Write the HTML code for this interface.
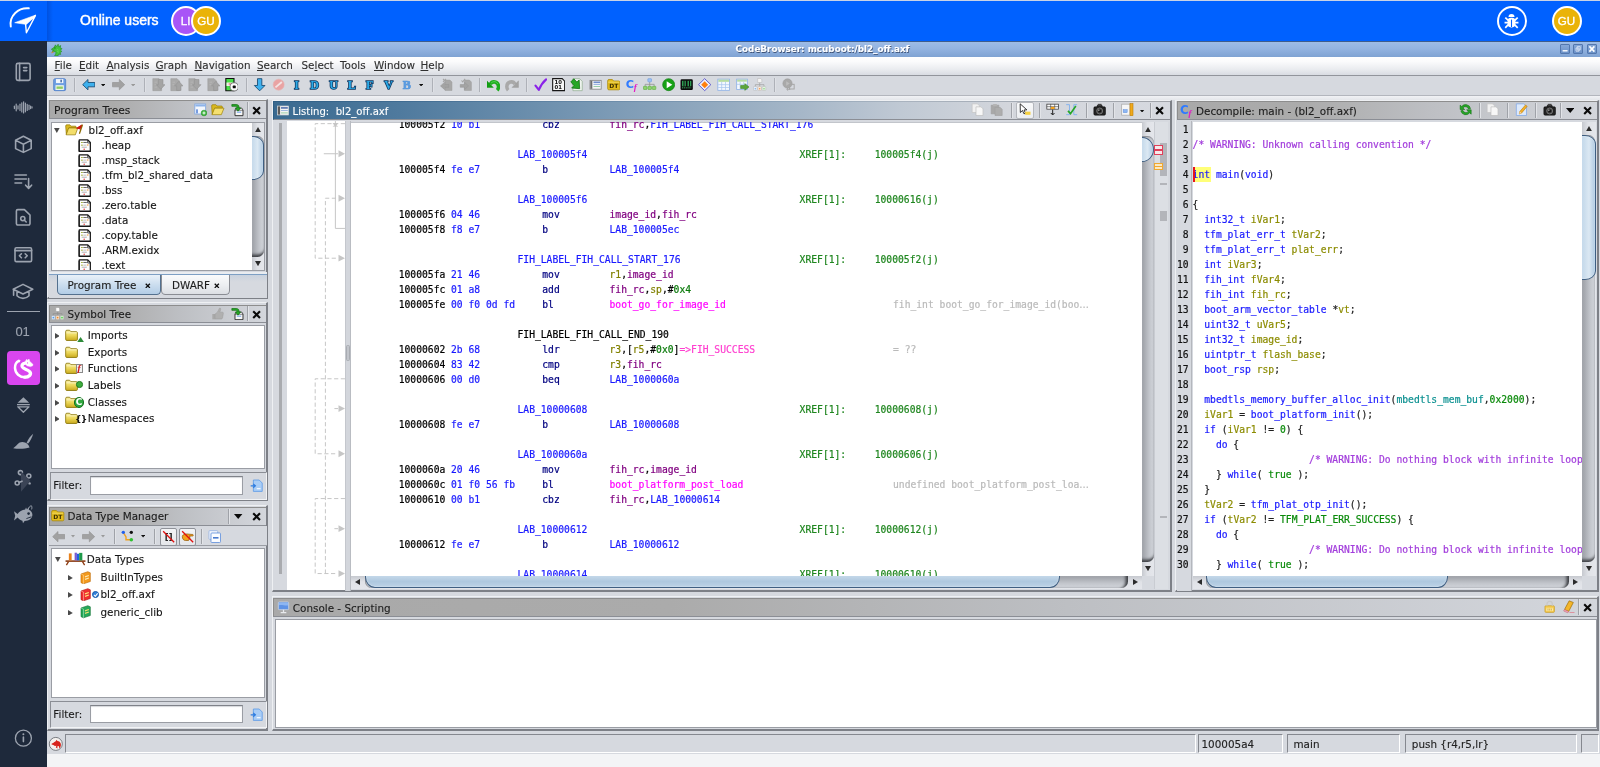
<!DOCTYPE html>
<html lang="en"><head><meta charset="utf-8"><title>CodeBrowser: mcuboot:/bl2_off.axf</title>
<style>
html,body{margin:0;padding:0}
body{width:1600px;height:767px;overflow:hidden;position:relative;background:#f3f4f6;font-family:"DejaVu Sans","Liberation Sans",sans-serif;font-size:10.4px;color:#161616}
div,svg,span.a{position:absolute;box-sizing:border-box}
.t{-webkit-text-stroke:.12px;white-space:pre;line-height:13px;height:13px}
.m{-webkit-text-stroke:.2px;font-family:"DejaVu Sans Mono","Liberation Mono",monospace;font-size:9.69px;white-space:pre;line-height:15px;height:15px}
.clip{overflow:hidden}
u{text-decoration-thickness:1px;text-underline-offset:1px}

</style></head>
<body>
<div id="root" style="left:0;top:0;width:1600px;height:767px;will-change:transform;background:#f3f4f6">

<!-- p_header -->
<div style="left:0px;top:0px;width:1600px;height:41px;background:#0061ff"></div><div style="left:0px;top:0px;width:1600px;height:1px;background:#c9d3e6"></div><div style="left:47px;top:1px;width:6px;height:40px;background:linear-gradient(to right,rgba(0,40,140,.28),rgba(0,40,140,0))"></div><svg style="left:0px;top:0px" width="47" height="41" viewBox="0 0 47 41"><path d="M28.800 8.300C18.500 7.400 9 15.500 10.800 26.600" fill="none" stroke="#fff" stroke-width="1.900" stroke-linecap="round"/><path d="M35.800 15L14.700 22.700 25.400 24.300z" fill="#fff" stroke="#fff" stroke-width=".6" stroke-linejoin="round"/><path d="M35.400 15.600L25.600 24.400 26.400 32.800z" fill="none" stroke="#fff" stroke-width="1.400" stroke-linejoin="round"/></svg><div class="t" style="left:80px;top:12.2px;font-family:'Liberation Sans',sans-serif;font-size:14px;line-height:17px;height:17px;color:#fff;-webkit-text-stroke:0.45px #fff">Online users</div><div style="left:170.6px;top:5.5px;width:30px;height:30px;border-radius:50%;border:2px solid #fff;color:#fff;font-family:'Liberation Sans',sans-serif;font-size:11.600px;line-height:26.400px;text-align:center;-webkit-text-stroke:.3px #fff;background:#a855f7">LI</div><div style="left:191px;top:5.5px;width:30px;height:30px;border-radius:50%;border:2px solid #fff;color:#fff;font-family:'Liberation Sans',sans-serif;font-size:11.600px;line-height:26.400px;text-align:center;-webkit-text-stroke:.3px #fff;background:#eab308">GU</div><div style="left:1496.5px;top:5.5px;width:30px;height:30px;border-radius:50%;border:2px solid #fff"></div><svg style="left:1500px;top:10px" width="24" height="22" viewBox="1500 10 24 22"><path d="M1508.500 16.900a3 3 0 0 1 6 0z" fill="#fff"/><rect x="1507.700" y="17.700" width="7.600" height="9.700" rx="3.300" fill="#fff"/><path d="M1511.500 19.600v7.400" stroke="#0061ff" stroke-width="1.100"/><path d="M1508 20.200l-2.100-2M1507.800 22.700h-2.400M1508 25l-2.100 2.200M1515 20.200l2.100-2M1515.200 22.700h2.400M1515 25l2.100 2.200" stroke="#fff" stroke-width="1.700" stroke-linecap="square"/></svg><div style="left:1551.5px;top:5.5px;width:30px;height:30px;border-radius:50%;border:2px solid #fff;color:#fff;font-family:'Liberation Sans',sans-serif;font-size:11.600px;line-height:26.400px;text-align:center;-webkit-text-stroke:.3px #fff;background:#eab308">GU</div>
<!-- p_sidebar -->
<div style="left:0px;top:41px;width:47px;height:726px;background:#1e293b"></div><svg style="left:13px;top:60.6px" width="21" height="22" viewBox="0 0 21 22" ><rect x="3.3" y="2.4" width="13.8" height="17" rx="1.6" fill="none" stroke="#9ca3af" stroke-width="1.6" stroke-linecap="round" stroke-linejoin="round"/><path d="M6.6 2.4V19.4M10.6 6.6h3.2M10.6 9.6h3.2" fill="none" stroke="#9ca3af" stroke-width="1.6" stroke-linecap="round" stroke-linejoin="round"/></svg><svg style="left:0px;top:95px" width="47" height="25" viewBox="0 95 47 25" ><path d="M14.4 106.2V108.6" stroke="#9ca3af" stroke-width="1.2" stroke-linecap="round"/><path d="M16.2 104V110.8" stroke="#9ca3af" stroke-width="1.2" stroke-linecap="round"/><path d="M18 105.8V109" stroke="#9ca3af" stroke-width="1.2" stroke-linecap="round"/><path d="M20 104.2V110.6" stroke="#9ca3af" stroke-width="1.2" stroke-linecap="round"/><path d="M21.8 102.8V112" stroke="#9ca3af" stroke-width="1.2" stroke-linecap="round"/><path d="M23.6 101.8V113" stroke="#9ca3af" stroke-width="1.2" stroke-linecap="round"/><path d="M25.4 103V111.8" stroke="#9ca3af" stroke-width="1.2" stroke-linecap="round"/><path d="M27.2 104.4V110.4" stroke="#9ca3af" stroke-width="1.2" stroke-linecap="round"/><path d="M29 105.2V109.6" stroke="#9ca3af" stroke-width="1.2" stroke-linecap="round"/><path d="M30.6 106.2V108.6" stroke="#9ca3af" stroke-width="1.2" stroke-linecap="round"/><path d="M32 106.8V108" stroke="#9ca3af" stroke-width="1.2" stroke-linecap="round"/></svg><svg style="left:12px;top:133px" width="23" height="22" viewBox="12 133 23 22" ><path d="M23.4 136.2 L31.2 140.2 V148.6 L23.4 152.4 L15.6 148.6 V140.2 Z M15.8 140.4 L23.4 144.3 L31 140.4 M23.4 144.3 V152.2" fill="none" stroke="#9ca3af" stroke-width="1.6" stroke-linecap="round" stroke-linejoin="round"/></svg><svg style="left:12px;top:171px" width="23" height="21" viewBox="12 171 23 21" ><path d="M15 175h11.4M15 179h11.4M15 183h6.6M28.6 178.6v9.6M25.6 185.2l3 3.2 3-3.2" fill="none" stroke="#9ca3af" stroke-width="1.6" stroke-linecap="round" stroke-linejoin="round" stroke-width="1.5"/></svg><svg style="left:13px;top:207px" width="21" height="21" viewBox="13 207 21 21" ><path d="M17.8 209.6h6.6l5.6 5.4v8.6a1.4 1.4 0 0 1-1.4 1.4h-10.8a1.4 1.4 0 0 1-1.4-1.4v-12.6a1.4 1.4 0 0 1 1.4-1.4z" fill="none" stroke="#9ca3af" stroke-width="1.6" stroke-linecap="round" stroke-linejoin="round"/><circle cx="22.8" cy="218.6" r="2.1" fill="none" stroke="#9ca3af" stroke-width="1.6" stroke-linecap="round" stroke-linejoin="round" stroke-width="1.3"/><path d="M24.4 220.2l1.8 1.8" fill="none" stroke="#9ca3af" stroke-width="1.6" stroke-linecap="round" stroke-linejoin="round" stroke-width="1.3"/></svg><svg style="left:12px;top:245px" width="23" height="20" viewBox="12 245 23 20" ><rect x="15" y="247.8" width="16.6" height="13.8" rx="1.4" fill="none" stroke="#9ca3af" stroke-width="1.6" stroke-linecap="round" stroke-linejoin="round"/><path d="M15 250.6h16.6" fill="none" stroke="#9ca3af" stroke-width="1.6" stroke-linecap="round" stroke-linejoin="round" stroke-width="2"/><path d="M21.4 253.8l-2 2 2 2M25.2 253.8l2 2-2 2" fill="none" stroke="#9ca3af" stroke-width="1.6" stroke-linecap="round" stroke-linejoin="round" stroke-width="1.4"/></svg><svg style="left:11px;top:281px" width="25" height="21" viewBox="11 281 25 21" ><path d="M23 284.4l9.8 4.8-9.8 4.8-9.8-4.8z M17 291.2v4.6c1.6 1.8 3.6 2.6 6 2.6s4.4-.8 6-2.6v-4.6 M13.6 289.6v5.6" fill="none" stroke="#9ca3af" stroke-width="1.6" stroke-linecap="round" stroke-linejoin="round"/></svg><div style="left:7px;top:311px;width:33px;height:1.2px;background:#9ca3af"></div><div class="t" style="left:15.4px;top:324px;font-family:'Liberation Sans',sans-serif;font-size:13px;line-height:16px;height:16px;color:#9ca3af">01</div><div style="left:6.7px;top:351px;width:33.3px;height:34px;background:#d946ef;border-radius:3.800px"></div><svg style="left:6px;top:350px" width="36" height="36" viewBox="6 350 36 36" ><path d="M28.600 363.600C24.200 362 21.400 364.200 22.200 366.800C23 369.200 27.400 369 29.800 371.800C31.800 374.400 29 377.200 24.600 377.200" fill="none" stroke="#fff" stroke-width="3.300" stroke-linecap="round"/><path d="M25.600 377.300C19.500 377.600 15.200 373.200 15 368C14.900 364.400 16.400 362 18.800 360.900" fill="none" stroke="#fff" stroke-width="2.500" stroke-linecap="round"/><path d="M17 361.200L20.800 360.200 19.400 362.600z" fill="#fff"/><path d="M25.200 361.400L26.800 359.200 27.600 360.600 29 359 29.600 361.200 33 364.400 32.600 365.800 30.400 366.600 26.800 365.800z" fill="#fff" stroke="#fff" stroke-width=".5" stroke-linejoin="round"/><circle cx="27.600" cy="362.900" r=".55" fill="#d946ef"/></svg><svg style="left:15px;top:395px" width="17" height="20" viewBox="15 395 17 20" ><path d="M23.4 397.2l5.8 5.6h-11.6z" fill="#9ca3af"/><path d="M17 404.600h12.800" stroke="#9ca3af" stroke-width="1.300"/><path d="M17.800 406.800h11.200l-5.600 5.400z" fill="none" stroke="#9ca3af" stroke-width="1.300" stroke-linejoin="round"/></svg><svg style="left:11px;top:432px" width="25" height="20" viewBox="11 432 25 20" ><path d="M13.200 448.200c2.200-1 3.600-3.800 6-5.400 2.600-1.600 5.800-1 8 1 1 .900 1.800 2.200 2.400 3.600-4.800 1.600-11 1.800-16.400.800z" fill="#9ca3af"/><path d="M26.600 443c1.600-3.800 3.600-6.800 6.600-9.200-1 3.400-2.600 6.800-5 9.800z" fill="#9ca3af"/></svg><svg style="left:12px;top:468px" width="23" height="24" viewBox="12 468 23 24" ><circle cx="20.400" cy="472.600" r="2" fill="none" stroke="#9ca3af" stroke-width="1.6" stroke-linecap="round" stroke-linejoin="round" stroke-width="1.300"/><circle cx="28.800" cy="476" r="2" fill="none" stroke="#9ca3af" stroke-width="1.6" stroke-linecap="round" stroke-linejoin="round" stroke-width="1.300"/><circle cx="17.200" cy="483" r="2" fill="none" stroke="#9ca3af" stroke-width="1.6" stroke-linecap="round" stroke-linejoin="round" stroke-width="1.300"/><circle cx="29.600" cy="483.400" r="1.200" fill="#9ca3af"/><path d="M21 471.200l9.400 9.600-9.400 11z" fill="#3b4456"/><path d="M19 482.400l3-1.200" fill="none" stroke="#9ca3af" stroke-width="1.6" stroke-linecap="round" stroke-linejoin="round" stroke-width="1.200"/></svg><svg style="left:12px;top:505px" width="23" height="22" viewBox="12 505 23 22" ><path d="M14 511.200l3.600 2.800c1.600-2.600 4.400-4.400 7.600-4.600l.8-1.800 1 1.800 1.400-2 .4 2.400c2.200.8 3.600 2.800 3.600 5 0 3.400-3.400 6.200-7.800 6.200l-1.600 2.200-.6-2.400c-2-.4-3.600-1.600-4.800-3.200l-3.600 3 1.200-4.800z" fill="#9ca3af"/><circle cx="28.600" cy="513.600" r="1.300" fill="#1e293b"/><path d="M28.200 509.600c.4-2.200 1.600-3.600 3.200-3.800.6 1 .6 2.200.2 3.600" fill="none" stroke="#9ca3af" stroke-width="1"/><path d="M26.400 518.600l5-1.800" stroke="#1e293b" stroke-width=".9"/></svg><svg style="left:13px;top:728px" width="21" height="21" viewBox="13 728 21 21" ><circle cx="23.400" cy="738.200" r="8" fill="none" stroke="#9ca3af" stroke-width="1.300"/><path d="M23.400 737v4.600" stroke="#9ca3af" stroke-width="1.600" stroke-linecap="round"/><circle cx="23.400" cy="734.200" r="1" fill="#9ca3af"/></svg>
<!-- p_chrome -->
<div style="left:47px;top:41px;width:1553px;height:712.5px;background:#d6d9df"></div><div style="left:47px;top:41px;width:1553px;height:1px;background:#3f5d8c"></div><div style="left:47px;top:41.6px;width:1553px;height:15px;background:linear-gradient(#9dbce6,#93b3e0 45%,#7fa3d3)"></div><svg style="left:49.600px;top:42.600px" width="13.600" height="13.600" viewBox="0 0 16 16"><path d="M1.600 7.400L5 5l1.400-2.800 1.200 2.200 2-3 .5 3 2.500-1.400-.6 3 2.100.5-1.600 2 1.500 1.500-2 1 .5 2.500-2-.5-1 2H5.400c1.500-2 2-3.500 1-5l-2.400.5-1.600-1 2.600-1z" fill="#43c43c" stroke="#218a1f" stroke-width=".7" stroke-linejoin="round"/><path d="M3.600 9.600L1 11.800l1.400.4 2.200-1.800z" fill="#d9822b"/><circle cx="5.800" cy="5.800" r=".7" fill="#0a5a0a"/><path d="M8 7.500l2 1M8.500 10l2 .8" stroke="#8fe08a" stroke-width=".6"/></svg><div class="t" style="left:735.6px;top:43.9px;font-weight:bold;font-size:8.800px;color:#fff;text-shadow:0.7px 0.8px 0.6px #3f5478;line-height:11px;height:11px">CodeBrowser: mcuboot:/bl2_off.axf</div><div style="left:1560.2px;top:44.3px;width:10px;height:9.5px;background:linear-gradient(#86a8d8,#6c92c8);border:1px solid #5377ad;border-radius:1px"></div><div style="left:1573.4px;top:44.3px;width:10px;height:9.5px;background:linear-gradient(#86a8d8,#6c92c8);border:1px solid #5377ad;border-radius:1px"></div><div style="left:1586.8px;top:44.3px;width:10px;height:9.5px;background:linear-gradient(#86a8d8,#6c92c8);border:1px solid #5377ad;border-radius:1px"></div><svg style="left:1560px;top:44px" width="38" height="10" viewBox="0 0 38 10"><path d="M2.600 6.800h5" stroke="#fff" stroke-width="1.400"/><path d="M17.200 2.600h3v3.400h-3z M16 4h3v3.200h-3z" fill="none" stroke="#dfe8f6" stroke-width=".8"/><path d="M29.400 2.400l5 5.200M34.400 2.400l-5 5.200" stroke="#fff" stroke-width="1.600"/></svg><div style="left:47px;top:56.6px;width:1553px;height:19px;background:linear-gradient(#ffffff 0%,#fbfbfc 25%,#e9ebef 70%,#d9dce2 100%);border-bottom:1px solid #92959c"></div><div class="t" style="left:54.6px;top:59.3px;color:#303030"><u>F</u>ile</div><div class="t" style="left:79px;top:59.3px;color:#303030"><u>E</u>dit</div><div class="t" style="left:106.5px;top:59.3px;color:#303030"><u>A</u>nalysis</div><div class="t" style="left:155.5px;top:59.3px;color:#303030"><u>G</u>raph</div><div class="t" style="left:194.5px;top:59.3px;color:#303030"><u>N</u>avigation</div><div class="t" style="left:257px;top:59.3px;color:#303030"><u>S</u>earch</div><div class="t" style="left:301.5px;top:59.3px;color:#303030">Se<u>l</u>ect</div><div class="t" style="left:340px;top:59.3px;color:#303030">Tools</div><div class="t" style="left:374px;top:59.3px;color:#303030"><u>W</u>indow</div><div class="t" style="left:420.5px;top:59.3px;color:#303030"><u>H</u>elp</div><div style="left:47px;top:95.2px;width:1553px;height:1px;background:#b3b6bd"></div><div style="left:47px;top:96.2px;width:1553px;height:3.8px;background:linear-gradient(#f1f2f5,#e4e6ea)"></div><div style="left:47px;top:731.6px;width:1553px;height:21.9px;background:#d6d9df"></div><div style="left:65.4px;top:734.3px;width:1130.6px;height:19.2px;border-top:1.5px solid #85888f;border-left:1.5px solid #85888f;border-bottom:1px solid #fff;border-right:1px solid #fff;background:#d6d9df"></div><div style="left:1198.2px;top:734.3px;width:85.3px;height:19.2px;border-top:1.5px solid #85888f;border-left:1.5px solid #85888f;border-bottom:1px solid #fff;border-right:1px solid #fff;background:#d6d9df"></div><div class="t" style="left:1201.5px;top:738.4px;color:#222">100005a4</div><div style="left:1287.2px;top:734.3px;width:113.3px;height:19.2px;border-top:1.5px solid #85888f;border-left:1.5px solid #85888f;border-bottom:1px solid #fff;border-right:1px solid #fff;background:#d6d9df"></div><div class="t" style="left:1293.5px;top:738.4px;color:#222">main</div><div style="left:1404.5px;top:734.3px;width:172.7px;height:19.2px;border-top:1.5px solid #85888f;border-left:1.5px solid #85888f;border-bottom:1px solid #fff;border-right:1px solid #fff;background:#d6d9df"></div><div class="t" style="left:1411.8px;top:738.4px;color:#222">push {r4,r5,lr}</div><div style="left:1581px;top:734.3px;width:17.6px;height:19.2px;border-top:1.5px solid #85888f;border-left:1.5px solid #85888f;border-bottom:1px solid #fff;border-right:1px solid #fff;background:#d6d9df"></div><svg style="left:48px;top:736px" width="16" height="16" viewBox="0 0 16 16"><circle cx="7.800" cy="7.900" r="6.500" fill="#f4f1ee" stroke="#6d6f76" stroke-width=".9"/><path d="M3.600 7.800c1.400-.600 2.400-1.800 3.800-2.400l1.400-1.600.6 1.200c1.800 0 3 1.200 3.400 2.800.4 1.800-.2 3.400-1.400 4.600l-.6-2.400-1.600.6.400 1.800-1.800-.8.600-1.800c-1.200.4-2.200 0-3-.8l-1.800-.4z" fill="#d8231c"/></svg>
<!-- p_toolbar -->
<svg style="left:53.3px;top:78.4px" width="13.333" height="13.333" viewBox="0 0 16 16"><rect x=".8" y=".8" width="14.400" height="14.400" rx="1.800" fill="#6e9fe3" stroke="#4a7bc8" stroke-width=".9"/><rect x="3.600" y="1.300" width="8.800" height="4.800" fill="#f2f6fc"/><rect x="8.800" y="2" width="2" height="3.200" fill="#5578ad"/><rect x="3" y="8.600" width="10" height="5.800" fill="#eef5e8"/><rect x="4.200" y="10.200" width="7.600" height="2.800" fill="#8fcb62"/></svg><svg style="left:81.5px;top:78.4px" width="13.333" height="13.333" viewBox="0 0 16 16"><path d="M.8 8 L7.200 1.800 V5.400 H15.400 V10.600 H7.200 V14.200 Z" fill="#3eb1ee" stroke="#14466e" stroke-width="1" stroke-linejoin="round"/></svg><svg style="left:111.5px;top:78.4px" width="13.333" height="13.333" viewBox="0 0 16 16"><path d="M15.200 8 L8.800 1.800 V5.400 H.6 V10.600 H8.800 V14.200 Z" fill="#a1a1a1" stroke="#949494" stroke-width=".8" stroke-linejoin="round"/></svg><svg style="left:151.5px;top:78.4px" width="13.333" height="13.333" viewBox="0 0 16 16"><path d="M1 .8h7.500l3 3V15.200H1z" fill="#a9a9a9" stroke="#9d9d9d" stroke-width=".7"/><path d="M7.800 1.800h5.400V8h2.400l-5.100 5.600L5.400 8h2.400z" fill="#a4a4a4" stroke="#929292" stroke-width=".7" stroke-linejoin="round"/><path d="M3 5h3M3 8h2M3 11h3" stroke="#b9b9b9" stroke-width=".8"/></svg><svg style="left:170px;top:78.4px" width="13.333" height="13.333" viewBox="0 0 16 16"><path d="M1 .8h7.500l3 3V15.200H1z" fill="#a9a9a9" stroke="#9d9d9d" stroke-width=".7"/><path d="M8 15V9.500H5.600L10.600 4l5 5.500h-2.400V15z" fill="#a4a4a4" stroke="#939393" stroke-width=".7"/><path d="M3 5h3M3 8h2" stroke="#bdbdbd" stroke-width=".8"/></svg><svg style="left:188.4px;top:78.4px" width="13.333" height="13.333" viewBox="0 0 16 16"><path d="M1 .8h7.500l3 3V15.200H1z" fill="#a9a9a9" stroke="#9d9d9d" stroke-width=".7"/><path d="M7.800 1.800h5.400V8h2.400l-5.100 5.600L5.400 8h2.400z" fill="#a4a4a4" stroke="#929292" stroke-width=".7" stroke-linejoin="round"/><path d="M3 5h3M3 8h2M3 11h3" stroke="#b9b9b9" stroke-width=".8"/></svg><svg style="left:206.8px;top:78.4px" width="13.333" height="13.333" viewBox="0 0 16 16"><path d="M1 .8h7.500l3 3V15.200H1z" fill="#a9a9a9" stroke="#9d9d9d" stroke-width=".7"/><path d="M8 15V9.500H5.600L10.600 4l5 5.500h-2.400V15z" fill="#a4a4a4" stroke="#939393" stroke-width=".7"/><path d="M3 5h3M3 8h2" stroke="#bdbdbd" stroke-width=".8"/></svg><svg style="left:224.8px;top:78.4px" width="13.333" height="13.333" viewBox="0 0 16 16"><path d="M1 .700h9.800V15.300H1z" fill="#46e046" stroke="#111" stroke-width="1.300"/><rect x="1.800" y="5.400" width="8.200" height="4.200" fill="#f3ecec"/><rect x="4.400" y="6.400" width="3.400" height="1.600" fill="#e47a7a"/><circle cx="11" cy="10.600" r="4.900" fill="#fbfbfb" stroke="#6a6a6a" stroke-width="1"/><rect x="9.300" y="9" width="3.600" height="3.400" rx=".8" fill="#0c0c0c"/></svg><svg style="left:253.4px;top:78.4px" width="13.333" height="13.333" viewBox="0 0 16 16"><path d="M8 15.400 L1.600 9 H5.400 V.8 H10.600 V9 H14.400 Z" fill="#3eb1ee" stroke="#14466e" stroke-width="1" stroke-linejoin="round"/></svg><svg style="left:271.8px;top:78.4px" width="13.333" height="13.333" viewBox="0 0 16 16"><circle cx="8" cy="8" r="6.600" fill="#e9a3a3" stroke="#e5b4b4" stroke-width=".8"/><path d="M4.200 11.200L11.800 4.800" stroke="#f3e3e3" stroke-width="2.200"/></svg><svg style="left:290px;top:78.4px" width="13.333" height="13.333" viewBox="0 0 16 16"><text x="8" y="13" text-anchor="middle" style="font-family:'Liberation Serif',serif;font-weight:bold;font-size:14.500px" fill="#2aa9e6" stroke="#0c3560" stroke-width="1.9" paint-order="stroke">I</text></svg><svg style="left:308.4px;top:78.4px" width="13.333" height="13.333" viewBox="0 0 16 16"><text x="8" y="13" text-anchor="middle" style="font-family:'Liberation Serif',serif;font-weight:bold;font-size:14.500px" fill="#2aa9e6" stroke="#0c3560" stroke-width="1.9" paint-order="stroke">D</text></svg><svg style="left:326.8px;top:78.4px" width="13.333" height="13.333" viewBox="0 0 16 16"><text x="8" y="13" text-anchor="middle" style="font-family:'Liberation Serif',serif;font-weight:bold;font-size:14.500px" fill="#2aa9e6" stroke="#0c3560" stroke-width="1.9" paint-order="stroke">U</text></svg><svg style="left:345.2px;top:78.4px" width="13.333" height="13.333" viewBox="0 0 16 16"><text x="8" y="13" text-anchor="middle" style="font-family:'Liberation Serif',serif;font-weight:bold;font-size:14.500px" fill="#2aa9e6" stroke="#0c3560" stroke-width="1.9" paint-order="stroke">L</text></svg><svg style="left:363.2px;top:78.4px" width="13.333" height="13.333" viewBox="0 0 16 16"><text x="8" y="13" text-anchor="middle" style="font-family:'Liberation Serif',serif;font-weight:bold;font-size:14.500px" fill="#2aa9e6" stroke="#0c3560" stroke-width="1.9" paint-order="stroke">F</text></svg><svg style="left:382px;top:78.4px" width="13.333" height="13.333" viewBox="0 0 16 16"><text x="8" y="13" text-anchor="middle" style="font-family:'Liberation Serif',serif;font-weight:bold;font-size:14.500px" fill="#2aa9e6" stroke="#0c3560" stroke-width="1.9" paint-order="stroke">V</text></svg><svg style="left:400.3px;top:78.4px" width="13.333" height="13.333" viewBox="0 0 16 16"><text x="8" y="13" text-anchor="middle" style="font-family:'Liberation Serif',serif;font-weight:bold;font-size:14.500px" fill="#5a9be0" stroke="#4f8fd6" stroke-width="0.8" paint-order="stroke">B</text></svg><svg style="left:440.4px;top:78.4px" width="13.333" height="13.333" viewBox="0 0 16 16"><path d="M6 2.500h6l2.400 2.400V15H6z" fill="#a8a8a8" stroke="#9d9d9d" stroke-width=".6"/><path d="M.6 9.500L5.600 5v2.800h5v3.400h-5V14z" fill="#a3a3a3" stroke="#949494" stroke-width=".6"/><path d="M3.600 1.200l3.600 3.400M7.200 1.200L3.600 4.600" stroke="#a5a5a5" stroke-width="1.300"/></svg><svg style="left:459px;top:78.4px" width="13.333" height="13.333" viewBox="0 0 16 16"><path d="M6.500 2.500h6l2.400 2.400V15H6.500z" fill="#a8a8a8" stroke="#9d9d9d" stroke-width=".6"/><path d="M11.500 9.500L6.500 5v2.800h-5v3.400h5V14z" fill="#a3a3a3" stroke="#949494" stroke-width=".6"/><path d="M3 3l1.400 1.600L7.400 1" stroke="#a5a5a5" stroke-width="1.300" fill="none"/></svg><svg style="left:487px;top:78.4px" width="13.333" height="13.333" viewBox="0 0 16 16"><path d="M4 7.600C6 3.200 13.600 3.600 13.800 10.200C13.850 12 13.200 13.800 12.200 14.800" fill="none" stroke="#1cad1c" stroke-width="4.200"/><path d="M5 6C7.500 3.400 11.500 4 12.800 7" fill="none" stroke="#6fe06f" stroke-width="1" opacity=".8"/><path d="M-.2 3.400V11.300H7.600z" fill="#12a012" stroke="#0c8a0c" stroke-width=".5" stroke-linejoin="round"/></svg><svg style="left:505.2px;top:78.4px" width="13.333" height="13.333" viewBox="0 0 16 16"><path d="M12 7.600C10 3.200 2.400 3.600 2.200 10.200C2.150 12 2.800 13.800 3.800 14.800" fill="none" stroke="#a9a9a9" stroke-width="4.200"/><path d="M16.200 3.400V11.300H8.400z" fill="#a3a3a3" stroke="#9a9a9a" stroke-width=".5" stroke-linejoin="round"/></svg><svg style="left:534px;top:78.4px" width="13.333" height="13.333" viewBox="0 0 16 16"><path d="M1.800 9.200L5.800 14.200C8 9 10.600 5 14.600 1.600" fill="none" stroke="#8a22e8" stroke-width="2.600" stroke-linecap="round" stroke-linejoin="round"/></svg><svg style="left:552px;top:78.4px" width="13.333" height="13.333" viewBox="0 0 16 16"><path d="M.8 .8h11.400l3 3V15.200H.8z" fill="#f6f6f6" stroke="#161616" stroke-width="1.300"/><text x="7.600" y="7.400" text-anchor="middle" style="font-family:'DejaVu Sans','Liberation Sans',sans-serif;font-weight:bold;font-size:6.400px" fill="#111">10</text><text x="7.600" y="13.400" text-anchor="middle" style="font-family:'DejaVu Sans','Liberation Sans',sans-serif;font-weight:bold;font-size:6.400px" fill="#111">01</text></svg><svg style="left:570.3px;top:78.4px" width="13.333" height="13.333" viewBox="0 0 16 16"><path d="M3.500 .8h8l3.200 3.200V15.200H3.500z" fill="#eef4ee" stroke="#8aa88a" stroke-width=".8"/><path d="M1 4.600L4.600 1l3.600 3.800 2.800-2.400.6 10.400L2 12l2.800-2.800z" fill="#27a627" stroke="#0f6e0f" stroke-width=".9" stroke-linejoin="round"/></svg><svg style="left:588.6px;top:78.4px" width="13.333" height="13.333" viewBox="0 0 16 16"><rect x="1.200" y="2.800" width="13.400" height="10.600" fill="#f7f7f7" stroke="#7b7b7b" stroke-width=".9"/><rect x="1.600" y="3.200" width="2.400" height="9.800" fill="#6d6d6d"/><path d="M5.400 5h8" stroke="#3b64b8" stroke-width="1.300"/><path d="M5.400 7.600h8" stroke="#7fa3dc" stroke-width="1.100"/><path d="M5.400 10.200h8" stroke="#8fc9a0" stroke-width="1.100"/></svg><svg style="left:606.6px;top:78.4px" width="13.333" height="13.333" viewBox="0 0 16 16"><path d="M.8 3.400c0-1 .6-1.600 1.600-1.600h4l1.600 1.800h6c1 0 1.400.6 1.400 1.400v7.800c0 .8-.6 1.400-1.400 1.400H2.200c-.8 0-1.400-.6-1.400-1.400z" fill="#e4bd1c" stroke="#a98708" stroke-width=".9"/><path d="M1.400 5h13.200" stroke="#f6e27a" stroke-width=".9"/><text x="8.200" y="12.400" text-anchor="middle" style="font-family:'DejaVu Sans','Liberation Sans',sans-serif;font-weight:bold;font-size:7.200px" fill="#3a2d00">DT</text></svg><svg style="left:625.4px;top:78.4px" width="13.333" height="13.333" viewBox="0 0 16 16"><text x="6" y="11.400" text-anchor="middle" style="font-family:'DejaVu Sans','Liberation Sans',sans-serif;font-weight:bold;font-size:13.500px" fill="#2f7bff">C</text><text x="12.400" y="15" text-anchor="middle" style="font-family:'Liberation Serif',serif;font-weight:bold;font-style:italic;font-size:11px" fill="#e31cc4">f</text></svg><svg style="left:643.3px;top:78.4px" width="13.333" height="13.333" viewBox="0 0 16 16"><path d="M8 4.600v3M2.600 10V7.600h10.800V10M8 7.600V10" fill="none" stroke="#8e8e8e" stroke-width=".9"/><rect x="5.800" y=".8" width="4.400" height="3.800" rx=".6" fill="#9cc0f2" stroke="#6d9be0" stroke-width=".7"/><rect x=".6" y="10" width="4.200" height="3.800" rx=".6" fill="#8fd26f" stroke="#5cae3c" stroke-width=".7"/><rect x="5.900" y="10" width="4.200" height="3.800" rx=".6" fill="#8fd26f" stroke="#5cae3c" stroke-width=".7"/><rect x="11.200" y="10" width="4.200" height="3.800" rx=".6" fill="#8fd26f" stroke="#5cae3c" stroke-width=".7"/></svg><svg style="left:661.8px;top:78.4px" width="13.333" height="13.333" viewBox="0 0 16 16"><circle cx="8" cy="8" r="7.200" fill="#17a117" stroke="#0d7f0d" stroke-width=".8"/><path d="M5.600 3.800L12.400 8 5.600 12.200z" fill="#fff"/></svg><svg style="left:680.3px;top:78.4px" width="13.333" height="13.333" viewBox="0 0 16 16"><rect x=".6" y="1.600" width="14.800" height="12.800" rx="1.600" fill="#0b0b0b"/><rect x="2.400" y="3.400" width="4.600" height="6.600" fill="#2f9c52"/><rect x="9" y="3.400" width="4.600" height="6.600" fill="#2f9c52"/><rect x="4.200" y="3.400" width="1.200" height="6.600" fill="#0b0b0b"/><rect x="10.800" y="3.400" width="1.200" height="6.600" fill="#0b0b0b"/><path d="M2.400 11.800h11.200" stroke="#3fae62" stroke-width="1.200" stroke-dasharray="1.400 .8"/></svg><svg style="left:698px;top:78.4px" width="13.333" height="13.333" viewBox="0 0 16 16"><path d="M8 .8L15.400 8 8 15.200.6 8z" fill="#eef0fa" stroke="#4a46c8" stroke-width="1"/><path d="M8 3.800L12.200 8 8 12.200 3.800 8z" fill="#ff7f0e"/></svg><svg style="left:716.5px;top:78.4px" width="13.333" height="13.333" viewBox="0 0 16 16"><rect x="1" y="1.400" width="14" height="13.400" fill="#f4f8fe" stroke="#8fb2e6" stroke-width="1"/><rect x="1.600" y="2" width="12.800" height="2.600" fill="#b6dca0"/><path d="M1.400 8h13.200M1.400 11.400h13.200M5.600 4.800v9.600M10.200 4.800v9.600" stroke="#a9c6ee" stroke-width=".9"/></svg><svg style="left:735.6px;top:78.4px" width="13.333" height="13.333" viewBox="0 0 16 16"><rect x=".8" y="1.400" width="12.800" height="12.400" fill="#f4f8fe" stroke="#8fb2e6" stroke-width="1"/><rect x="1.400" y="2" width="11.600" height="2.400" fill="#b6dca0"/><path d="M1.200 7.600h12M5 4.600v9M9.200 4.600v9" stroke="#a9c6ee" stroke-width=".9"/><path d="M5.600 9h5V6.800l5 4-5 4v-2.200h-5z" fill="#5aa63a" stroke="#3d8423" stroke-width=".7" stroke-linejoin="round"/></svg><svg style="left:753.4px;top:78.4px" width="13.333" height="13.333" viewBox="0 0 16 16"><path d="M8 5v3M2.800 10.400V8h10.400v2.400M8 8v2.400" fill="none" stroke="#a3a3a3" stroke-width=".9"/><path d="M5.600 .6h3.600l1.400 1.400v3.400h-5z" fill="#f3f3f3" stroke="#b5b5b5" stroke-width=".6"/><rect x=".6" y="10.200" width="4.400" height="4.800" rx=".8" fill="#e6eef8" stroke="#b9b9b9" stroke-width=".6"/><rect x="5.800" y="10.200" width="4.400" height="4.800" rx=".8" fill="#fae6d6" stroke="#b9b9b9" stroke-width=".6"/><rect x="11" y="10.200" width="4.400" height="4.800" rx=".8" fill="#e2f4e0" stroke="#b9b9b9" stroke-width=".6"/><circle cx="2.800" cy="12.800" r=".9" fill="#7bb3ee"/><circle cx="8" cy="12.800" r=".9" fill="#f09a4a"/><circle cx="13.200" cy="12.800" r=".9" fill="#7ed27a"/></svg><svg style="left:781.6px;top:78.4px" width="13.333" height="13.333" viewBox="0 0 16 16"><circle cx="6.600" cy="6.600" r="5.600" fill="#a9a9a9" stroke="#9c9c9c" stroke-width=".6"/><path d="M5 3.800l4.400 2.800L5 9.400z" fill="#bdbdbd"/><rect x="9" y="7.600" width="5.600" height="5.600" fill="none" stroke="#a6a6a6" stroke-width="1.200"/><path d="M6 13.600h4M7.400 12l-1.800 1.600 1.800 1.600" fill="none" stroke="#a1a1a1" stroke-width="1"/></svg><div style="left:74px;top:78px;width:1px;height:13.8px;background:#aeb1b8"></div><div style="left:75px;top:78px;width:0.8px;height:13.8px;background:#dfe1e6"></div><div style="left:144px;top:78px;width:1px;height:13.8px;background:#aeb1b8"></div><div style="left:145px;top:78px;width:0.8px;height:13.8px;background:#dfe1e6"></div><div style="left:245.7px;top:78px;width:1px;height:13.8px;background:#aeb1b8"></div><div style="left:246.7px;top:78px;width:0.8px;height:13.8px;background:#dfe1e6"></div><div style="left:432px;top:78px;width:1px;height:13.8px;background:#aeb1b8"></div><div style="left:433px;top:78px;width:0.8px;height:13.8px;background:#dfe1e6"></div><div style="left:478.9px;top:78px;width:1px;height:13.8px;background:#aeb1b8"></div><div style="left:479.9px;top:78px;width:0.8px;height:13.8px;background:#dfe1e6"></div><div style="left:525.7px;top:78px;width:1px;height:13.8px;background:#aeb1b8"></div><div style="left:526.7px;top:78px;width:0.8px;height:13.8px;background:#dfe1e6"></div><div style="left:773.9px;top:78px;width:1px;height:13.8px;background:#aeb1b8"></div><div style="left:774.9px;top:78px;width:0.8px;height:13.8px;background:#dfe1e6"></div><svg style="left:100.6px;top:83.6px" width="4.200" height="2.600" viewBox="0 0 5 3"><path d="M0 0h5L2.500 3z" fill="#111"/></svg><svg style="left:130.6px;top:83.6px" width="4.200" height="2.600" viewBox="0 0 5 3"><path d="M0 0h5L2.500 3z" fill="#9a9a9a"/></svg><svg style="left:418.8px;top:83.6px" width="4.200" height="2.600" viewBox="0 0 5 3"><path d="M0 0h5L2.500 3z" fill="#111"/></svg>
<!-- p_left -->
<div style="left:47px;top:99.3px;width:221.2px;height:199.6px;background:#d6d9df;border-top:1.600px solid #eef0f3;border-left:1.600px solid #eef0f3;border-right:2px solid #7d8087;border-bottom:2px solid #7d8087"></div><div style="left:48.6px;top:100.4px;width:217.9px;height:18.9px;background:linear-gradient(to right,#a9a9a9 0%,#ababab 30%,#bdbfc3 60%,#d3d6dc 100%);border-bottom:1px solid #8b8e95;border-top:1px solid #8d8d8d;border-left:1px solid #8d8d8d"></div><div class="t" style="left:54.1px;top:103.85px;color:#1c1c1c;font-size:10.7px">Program Trees</div><svg style="left:193.8px;top:103.4px" width="13.333" height="13.333" viewBox="0 0 16 16"><rect x="1" y="1.200" width="13" height="12" fill="#f3f7fd" stroke="#7fa6e0" stroke-width="1"/><rect x="1.600" y="1.800" width="11.800" height="2.400" fill="#8db4ea"/><rect x="2.800" y="7.600" width="1.600" height="4.800" fill="#3b6fd0"/><circle cx="12" cy="12" r="3.400" fill="#3fb63f" stroke="#1d8a1d" stroke-width=".6"/><path d="M12 10.200v3.600M10.200 12h3.600" stroke="#fff" stroke-width="1.100"/></svg><svg style="left:211.4px;top:103.2px" width="13.333" height="13.333" viewBox="0 0 16 16"><path d="M.8 3.400c0-.8.5-1.400 1.400-1.400h3.600l1.400 1.600h5.200c.8 0 1.300.5 1.300 1.300V6.200H4.600L1.400 13.600z" fill="#d9b820" stroke="#9a7e00" stroke-width=".8"/><path d="M4.400 6.200h11.200L12.400 14H1.200z" fill="#f5e070" stroke="#9a7e00" stroke-width=".8" stroke-linejoin="round"/></svg><svg style="left:230.6px;top:103.2px" width="13.333" height="13.333" viewBox="0 0 16 16"><path d="M4.800 8.400h9.600v6.800H4.800z" fill="#f6f6f6" stroke="#2a2a2a" stroke-width="1.100"/><path d="M4.800 8.400l1.600-2.400h6.400l1.600 2.400" fill="#dcdcdc" stroke="#2a2a2a" stroke-width=".9"/><path d="M7 11h5.200" stroke="#6aa0e8" stroke-width="1.200"/><path d="M1 1.800h5.200c2.200 0 3.400 1.200 3.400 3V6h2L8.400 9.800 5.200 6h2V5c0-.6-.4-1-1-1H1z" fill="#27a627" stroke="#0e6e0e" stroke-width=".8" stroke-linejoin="round"/></svg><div style="left:246.9px;top:102px;width:1px;height:15.5px;background:#9fa2a8"></div><div style="left:247.9px;top:102px;width:0.7px;height:15.5px;background:#e2e4e8"></div><svg style="left:251.9px;top:105.7px" width="9.2" height="9.2" viewBox="0 0 10 10"><path d="M1.300 1.300L8.700 8.700M8.700 1.300L1.300 8.700" stroke="#0a0a0a" stroke-width="2.300" stroke-linecap="butt"/></svg><div style="left:50.5px;top:121.6px;width:214.5px;height:149.8px;border:1px solid #9a9da4;background:#fff"></div><div style="left:51.5px;top:122.6px;width:200.5px;height:147.8px;overflow:hidden"><svg style="left:2.9px;top:5.6px" width="5.6" height="5" viewBox="0 0 5.6 5"><path d="M0 0L2.8 5L5.6 0z" fill="#4a4a4a"/></svg><svg style="left:13.5px;top:0.3px" width="20" height="13.333" viewBox="0 0 24 16"><path d="M.8 3.600c0-.8.5-1.400 1.400-1.400h3.600l1.400 1.600h5c.8 0 1.300.5 1.300 1.300V6H4.600L1.600 13.800z" fill="#d9b820" stroke="#8f7400" stroke-width=".8"/><path d="M4.400 6h11L12.400 14.200H1.400z" fill="#f3de6a" stroke="#8f7400" stroke-width=".8" stroke-linejoin="round"/><path d="M13.600 6.200L20.800 1.600l.8 1-3.600 10.600-1.400-.6 2-6.200z" fill="#8a6a00"/><path d="M13 6.400l7.400-4.600L18.400 7.800z" fill="#d01414"/></svg><div class="t" style="left:37.1px;top:1.8px">bl2_off.axf</div><svg style="left:26.8px;top:16px" width="13.333" height="13.333" viewBox="0 0 16 16"><path d="M1.500 1.200h10.300l3 3V14.500H1.500z" fill="#fdfdfd" stroke="#1a1a1a" stroke-width="1.500" stroke-linejoin="round"/><path d="M1 15h14.400M1.200 2v13" stroke="#111" stroke-width="1.100"/><path d="M11.600 1.400v3.400h3.200" fill="none" stroke="#1a1a1a" stroke-width=".9"/><path d="M3.600 4.200h2.200M3.600 7.400h2.200" stroke="#9aa82a" stroke-width="1.100"/><path d="M6.400 4.200h4.200" stroke="#4a4a4a" stroke-width="1"/><path d="M6.400 7.400h3.800" stroke="#b4b4b4" stroke-width="1"/><circle cx="11.800" cy="7.200" r=".8" fill="#f08a1c"/><path d="M4.400 9.900h6.200" stroke="#c2c2c2" stroke-width="1.500"/><circle cx="7.400" cy="12.300" r=".9" fill="#e83a3a"/></svg><div class="t" style="left:50.1px;top:16px">.heap</div><svg style="left:26.8px;top:31px" width="13.333" height="13.333" viewBox="0 0 16 16"><path d="M1.500 1.200h10.300l3 3V14.500H1.500z" fill="#fdfdfd" stroke="#1a1a1a" stroke-width="1.500" stroke-linejoin="round"/><path d="M1 15h14.400M1.200 2v13" stroke="#111" stroke-width="1.100"/><path d="M11.600 1.400v3.400h3.200" fill="none" stroke="#1a1a1a" stroke-width=".9"/><path d="M3.600 4.200h2.200M3.600 7.400h2.200" stroke="#9aa82a" stroke-width="1.100"/><path d="M6.400 4.200h4.200" stroke="#4a4a4a" stroke-width="1"/><path d="M6.400 7.400h3.800" stroke="#b4b4b4" stroke-width="1"/><circle cx="11.800" cy="7.200" r=".8" fill="#f08a1c"/><path d="M4.400 9.900h6.200" stroke="#c2c2c2" stroke-width="1.500"/><circle cx="7.400" cy="12.300" r=".9" fill="#e83a3a"/></svg><div class="t" style="left:50.1px;top:31px">.msp_stack</div><svg style="left:26.8px;top:46px" width="13.333" height="13.333" viewBox="0 0 16 16"><path d="M1.500 1.200h10.300l3 3V14.500H1.500z" fill="#fdfdfd" stroke="#1a1a1a" stroke-width="1.500" stroke-linejoin="round"/><path d="M1 15h14.400M1.200 2v13" stroke="#111" stroke-width="1.100"/><path d="M11.600 1.400v3.400h3.200" fill="none" stroke="#1a1a1a" stroke-width=".9"/><path d="M3.600 4.200h2.200M3.600 7.400h2.200" stroke="#9aa82a" stroke-width="1.100"/><path d="M6.400 4.200h4.200" stroke="#4a4a4a" stroke-width="1"/><path d="M6.400 7.400h3.800" stroke="#b4b4b4" stroke-width="1"/><circle cx="11.800" cy="7.200" r=".8" fill="#f08a1c"/><path d="M4.400 9.900h6.200" stroke="#c2c2c2" stroke-width="1.500"/><circle cx="7.400" cy="12.300" r=".9" fill="#e83a3a"/></svg><div class="t" style="left:50.1px;top:46px">.tfm_bl2_shared_data</div><svg style="left:26.8px;top:61px" width="13.333" height="13.333" viewBox="0 0 16 16"><path d="M1.500 1.200h10.300l3 3V14.500H1.500z" fill="#fdfdfd" stroke="#1a1a1a" stroke-width="1.500" stroke-linejoin="round"/><path d="M1 15h14.400M1.200 2v13" stroke="#111" stroke-width="1.100"/><path d="M11.600 1.400v3.400h3.200" fill="none" stroke="#1a1a1a" stroke-width=".9"/><path d="M3.600 4.200h2.200M3.600 7.400h2.200" stroke="#9aa82a" stroke-width="1.100"/><path d="M6.400 4.200h4.200" stroke="#4a4a4a" stroke-width="1"/><path d="M6.400 7.400h3.800" stroke="#b4b4b4" stroke-width="1"/><circle cx="11.800" cy="7.200" r=".8" fill="#f08a1c"/><path d="M4.400 9.900h6.200" stroke="#c2c2c2" stroke-width="1.500"/><circle cx="7.400" cy="12.300" r=".9" fill="#e83a3a"/></svg><div class="t" style="left:50.1px;top:61px">.bss</div><svg style="left:26.8px;top:76px" width="13.333" height="13.333" viewBox="0 0 16 16"><path d="M1.500 1.200h10.300l3 3V14.500H1.500z" fill="#fdfdfd" stroke="#1a1a1a" stroke-width="1.500" stroke-linejoin="round"/><path d="M1 15h14.400M1.200 2v13" stroke="#111" stroke-width="1.100"/><path d="M11.600 1.400v3.400h3.200" fill="none" stroke="#1a1a1a" stroke-width=".9"/><path d="M3.600 4.200h2.200M3.600 7.400h2.200" stroke="#9aa82a" stroke-width="1.100"/><path d="M6.400 4.200h4.200" stroke="#4a4a4a" stroke-width="1"/><path d="M6.400 7.400h3.800" stroke="#b4b4b4" stroke-width="1"/><circle cx="11.800" cy="7.200" r=".8" fill="#f08a1c"/><path d="M4.400 9.900h6.200" stroke="#c2c2c2" stroke-width="1.500"/><circle cx="7.400" cy="12.300" r=".9" fill="#e83a3a"/></svg><div class="t" style="left:50.1px;top:76px">.zero.table</div><svg style="left:26.8px;top:91px" width="13.333" height="13.333" viewBox="0 0 16 16"><path d="M1.500 1.200h10.300l3 3V14.500H1.500z" fill="#fdfdfd" stroke="#1a1a1a" stroke-width="1.500" stroke-linejoin="round"/><path d="M1 15h14.400M1.200 2v13" stroke="#111" stroke-width="1.100"/><path d="M11.600 1.400v3.400h3.200" fill="none" stroke="#1a1a1a" stroke-width=".9"/><path d="M3.600 4.200h2.200M3.600 7.400h2.200" stroke="#9aa82a" stroke-width="1.100"/><path d="M6.400 4.200h4.200" stroke="#4a4a4a" stroke-width="1"/><path d="M6.400 7.400h3.800" stroke="#b4b4b4" stroke-width="1"/><circle cx="11.800" cy="7.200" r=".8" fill="#f08a1c"/><path d="M4.400 9.900h6.200" stroke="#c2c2c2" stroke-width="1.500"/><circle cx="7.400" cy="12.300" r=".9" fill="#e83a3a"/></svg><div class="t" style="left:50.1px;top:91px">.data</div><svg style="left:26.8px;top:106px" width="13.333" height="13.333" viewBox="0 0 16 16"><path d="M1.500 1.200h10.300l3 3V14.500H1.500z" fill="#fdfdfd" stroke="#1a1a1a" stroke-width="1.500" stroke-linejoin="round"/><path d="M1 15h14.400M1.200 2v13" stroke="#111" stroke-width="1.100"/><path d="M11.600 1.400v3.400h3.200" fill="none" stroke="#1a1a1a" stroke-width=".9"/><path d="M3.600 4.200h2.200M3.600 7.400h2.200" stroke="#9aa82a" stroke-width="1.100"/><path d="M6.400 4.200h4.200" stroke="#4a4a4a" stroke-width="1"/><path d="M6.400 7.400h3.800" stroke="#b4b4b4" stroke-width="1"/><circle cx="11.800" cy="7.200" r=".8" fill="#f08a1c"/><path d="M4.400 9.900h6.200" stroke="#c2c2c2" stroke-width="1.500"/><circle cx="7.400" cy="12.300" r=".9" fill="#e83a3a"/></svg><div class="t" style="left:50.1px;top:106px">.copy.table</div><svg style="left:26.8px;top:121px" width="13.333" height="13.333" viewBox="0 0 16 16"><path d="M1.500 1.200h10.300l3 3V14.500H1.500z" fill="#fdfdfd" stroke="#1a1a1a" stroke-width="1.500" stroke-linejoin="round"/><path d="M1 15h14.400M1.200 2v13" stroke="#111" stroke-width="1.100"/><path d="M11.600 1.400v3.400h3.200" fill="none" stroke="#1a1a1a" stroke-width=".9"/><path d="M3.600 4.200h2.200M3.600 7.400h2.200" stroke="#9aa82a" stroke-width="1.100"/><path d="M6.400 4.200h4.200" stroke="#4a4a4a" stroke-width="1"/><path d="M6.400 7.400h3.800" stroke="#b4b4b4" stroke-width="1"/><circle cx="11.800" cy="7.200" r=".8" fill="#f08a1c"/><path d="M4.400 9.900h6.200" stroke="#c2c2c2" stroke-width="1.500"/><circle cx="7.400" cy="12.300" r=".9" fill="#e83a3a"/></svg><div class="t" style="left:50.1px;top:121px">.ARM.exidx</div><svg style="left:26.8px;top:136px" width="13.333" height="13.333" viewBox="0 0 16 16"><path d="M1.500 1.200h10.300l3 3V14.500H1.500z" fill="#fdfdfd" stroke="#1a1a1a" stroke-width="1.500" stroke-linejoin="round"/><path d="M1 15h14.400M1.200 2v13" stroke="#111" stroke-width="1.100"/><path d="M11.600 1.400v3.400h3.200" fill="none" stroke="#1a1a1a" stroke-width=".9"/><path d="M3.600 4.200h2.200M3.600 7.400h2.200" stroke="#9aa82a" stroke-width="1.100"/><path d="M6.400 4.200h4.200" stroke="#4a4a4a" stroke-width="1"/><path d="M6.400 7.400h3.800" stroke="#b4b4b4" stroke-width="1"/><circle cx="11.800" cy="7.200" r=".8" fill="#f08a1c"/><path d="M4.400 9.900h6.200" stroke="#c2c2c2" stroke-width="1.500"/><circle cx="7.400" cy="12.300" r=".9" fill="#e83a3a"/></svg><div class="t" style="left:50.1px;top:136px">.text</div></div><div style="left:252px;top:122.6px;width:12.2px;height:147.8px;overflow:hidden"><div style="left:0px;top:0px;width:12.2px;height:147.8px;background:linear-gradient(to right,#c6c9cf,#e0e2e7 45%,#e4e6eb)"></div><div style="left:-7px;top:13.6px;width:18.8px;height:120.6px;border-radius:6.500px;background:linear-gradient(to right,#999ca2 0%,#a4a7ad 45%,#c2c5cb 75%,#d2d5db 100%);box-shadow:inset 0 -4px 3px -1.500px #3f4146, inset 0 1px 1px #8d9096"></div><div style="left:-8px;top:13.8px;width:20px;height:43.8px;border-radius:0 11px 11px 0 / 0 9px 9px 0;border:1px solid #3f5f82;background:linear-gradient(to right,#bdd3e8 0%,#c9dcec 45%,#dbe8f3 70%,#b0cae2 100%);box-shadow:inset 0 0 1.500px #f4f8fc"></div><svg style="left:2.9px;top:4.2px" width="6" height="5.2" viewBox="0 0 6 5.2"><path d="M0 5.2L3.0 0L6 5.2z" fill="#2b2b2b"/></svg><svg style="left:2.9px;top:138.4px" width="6" height="5.2" viewBox="0 0 6 5.2"><path d="M0 0L3.0 5.2L6 0z" fill="#2b2b2b"/></svg></div><div style="left:49px;top:272.4px;width:217.8px;height:1.4px;background:#e9ecf0"></div><div style="left:49px;top:273.8px;width:217.8px;height:1.6px;background:#7d9fc4"></div><div style="left:49px;top:275.4px;width:217.8px;height:22.9px;background:linear-gradient(#c9d2de,#d6d9df 30%)"></div><div style="left:57.3px;top:275.4px;width:103.5px;height:19.8px;border:1px solid #54718f;border-top:none;border-radius:0 0 4.500px 4.500px;background:linear-gradient(#e9f1f9,#c9dcee 55%,#b3cde6)"></div><div style="left:160.8px;top:275.4px;width:69.4px;height:19.8px;border:1px solid #8a8d94;border-top:none;border-radius:0 0 4.500px 4.500px;background:linear-gradient(#fafbfc,#eceef1 55%,#dcdfe4)"></div><div class="t" style="left:67.500px;top:279px;color:#1c1c1c">Program Tree</div><div class="t" style="left:172px;top:279px;color:#1c1c1c">DWARF</div><svg style="left:145.4px;top:282.6px" width="5.6" height="5.6" viewBox="0 0 10 10"><path d="M1.300 1.300L8.700 8.700M8.700 1.300L1.300 8.700" stroke="#0a0a0a" stroke-width="2.300" stroke-linecap="butt"/></svg><svg style="left:214.4px;top:282.6px" width="5.6" height="5.6" viewBox="0 0 10 10"><path d="M1.300 1.300L8.700 8.700M8.700 1.300L1.300 8.700" stroke="#0a0a0a" stroke-width="2.300" stroke-linecap="butt"/></svg><div style="left:47px;top:302.3px;width:221.2px;height:198.7px;background:#d6d9df;border-top:1.600px solid #eef0f3;border-left:1.600px solid #eef0f3;border-right:2px solid #7d8087;border-bottom:2px solid #7d8087"></div><div style="left:48.6px;top:304.8px;width:217.9px;height:18px;background:linear-gradient(to right,#a9a9a9 0%,#ababab 30%,#bdbfc3 60%,#d3d6dc 100%);border-bottom:1px solid #8b8e95;border-top:1px solid #8d8d8d;border-left:1px solid #8d8d8d"></div><svg style="left:51px;top:306.8px" width="13.333" height="13.333" viewBox="0 0 16 16"><path d="M8 5v3M2.800 10.400V8h10.400v2.400M8 8v2.400" fill="none" stroke="#8f8f8f" stroke-width=".9"/><path d="M5.800 .6h3.200l1.400 1.400v3.400h-4.600z" fill="#fafafa" stroke="#9b9b9b" stroke-width=".6"/><rect x=".6" y="10.200" width="4.400" height="5" rx=".8" fill="#d6e6fa" stroke="#9f9f9f" stroke-width=".6"/><rect x="5.800" y="10.200" width="4.400" height="5" rx=".8" fill="#fbe0c6" stroke="#9f9f9f" stroke-width=".6"/><rect x="11" y="10.200" width="4.400" height="5" rx=".8" fill="#d6f2d0" stroke="#9f9f9f" stroke-width=".6"/><circle cx="2.800" cy="12.800" r="1" fill="#4f9cf0"/><circle cx="8" cy="12.800" r="1" fill="#f08a2a"/><circle cx="13.200" cy="12.800" r="1" fill="#4fc84a"/></svg><div class="t" style="left:67.5px;top:307.8px;color:#1c1c1c;font-size:10.4px">Symbol Tree</div><svg style="left:211.2px;top:306.6px" width="13.333" height="13.333" viewBox="0 0 16 16"><path d="M1.600 8.400h3.200v6.400H1.600z" fill="#a9a9a9"/><path d="M4.800 8.600l3-2.400 2.400-4.800c.8-.4 1.600.2 1.400 1.400l-1 3.400h3c.8 0 1.400.6 1.200 1.400l-1 5.600c-.2.800-.8 1.200-1.600 1.200H4.800z" fill="#b0b0b0" stroke="#9f9f9f" stroke-width=".7"/></svg><svg style="left:230.6px;top:306.8px" width="13.333" height="13.333" viewBox="0 0 16 16"><path d="M4.800 8.400h9.600v6.800H4.800z" fill="#f6f6f6" stroke="#2a2a2a" stroke-width="1.100"/><path d="M4.800 8.400l1.600-2.400h6.400l1.600 2.400" fill="#dcdcdc" stroke="#2a2a2a" stroke-width=".9"/><path d="M7 11h5.200" stroke="#6aa0e8" stroke-width="1.200"/><path d="M1 1.800h5.200c2.200 0 3.400 1.200 3.400 3V6h2L8.400 9.800 5.200 6h2V5c0-.6-.4-1-1-1H1z" fill="#27a627" stroke="#0e6e0e" stroke-width=".8" stroke-linejoin="round"/></svg><div style="left:246.9px;top:306px;width:1px;height:15px;background:#9fa2a8"></div><div style="left:247.9px;top:306px;width:0.7px;height:15px;background:#e2e4e8"></div><svg style="left:251.9px;top:309.6px" width="9.2" height="9.2" viewBox="0 0 10 10"><path d="M1.300 1.300L8.700 8.700M8.700 1.300L1.300 8.700" stroke="#0a0a0a" stroke-width="2.300" stroke-linecap="butt"/></svg><div style="left:50.5px;top:325px;width:214.5px;height:144.2px;border:1px solid #9a9da4;background:#fff"></div><svg style="left:54.6px;top:333.1px" width="4.8" height="5.8" viewBox="0 0 4.8 5.8"><path d="M0 0L4.8 2.9L0 5.8z" fill="#4a4a4a"/></svg><svg style="left:64.8px;top:329px" width="13.333" height="13.333" viewBox="0 0 16 16"><defs><linearGradient id="fg" x1="0" y1="0" x2="0" y2="1"><stop offset="0" stop-color="#f8efa6"/><stop offset=".5" stop-color="#ecd75a"/><stop offset="1" stop-color="#c9a91c"/></linearGradient></defs><path d="M.8 3c0-.9.5-1.500 1.400-1.500h3.400l1.500 1.700h6.400c.9 0 1.400.5 1.400 1.400v7.800c0 .9-.5 1.400-1.400 1.400H2.200c-.9 0-1.400-.5-1.400-1.400z" fill="url(#fg)" stroke="#8a7608" stroke-width="1"/><path d="M1.600 4.600h12.600" stroke="#fdf6c4" stroke-width="1"/></svg><svg style="left:76.5px;top:337px" width="7.2" height="5.4" viewBox="0 0 7.2 5.4"><path d="M0 5.4L3.6 0L7.2 5.4z" fill="#2e8b3a"/></svg><div class="t" style="left:87.800px;top:329.1px">Imports</div><svg style="left:54.6px;top:349.77px" width="4.8" height="5.8" viewBox="0 0 4.8 5.8"><path d="M0 0L4.8 2.9L0 5.8z" fill="#4a4a4a"/></svg><svg style="left:64.8px;top:345.67px" width="13.333" height="13.333" viewBox="0 0 16 16"><defs><linearGradient id="fg" x1="0" y1="0" x2="0" y2="1"><stop offset="0" stop-color="#f8efa6"/><stop offset=".5" stop-color="#ecd75a"/><stop offset="1" stop-color="#c9a91c"/></linearGradient></defs><path d="M.8 3c0-.9.5-1.500 1.400-1.500h3.400l1.500 1.700h6.400c.9 0 1.400.5 1.400 1.400v7.800c0 .9-.5 1.400-1.400 1.400H2.200c-.9 0-1.400-.5-1.400-1.400z" fill="url(#fg)" stroke="#8a7608" stroke-width="1"/><path d="M1.600 4.600h12.600" stroke="#fdf6c4" stroke-width="1"/></svg><div class="t" style="left:87.800px;top:345.77px">Exports</div><svg style="left:54.6px;top:366.44px" width="4.8" height="5.8" viewBox="0 0 4.8 5.8"><path d="M0 0L4.8 2.9L0 5.8z" fill="#4a4a4a"/></svg><svg style="left:64.8px;top:362.34px" width="13.333" height="13.333" viewBox="0 0 16 16"><defs><linearGradient id="fg" x1="0" y1="0" x2="0" y2="1"><stop offset="0" stop-color="#f8efa6"/><stop offset=".5" stop-color="#ecd75a"/><stop offset="1" stop-color="#c9a91c"/></linearGradient></defs><path d="M.8 3c0-.9.5-1.500 1.400-1.500h3.400l1.500 1.700h6.400c.9 0 1.400.5 1.400 1.400v7.800c0 .9-.5 1.400-1.400 1.400H2.200c-.9 0-1.400-.5-1.400-1.400z" fill="url(#fg)" stroke="#8a7608" stroke-width="1"/><path d="M1.600 4.600h12.600" stroke="#fdf6c4" stroke-width="1"/></svg><div style="left:76.4px;top:363.84px;width:7px;height:9px;background:#f4f4f4;border:.7px solid #8a8a8a"></div><div class="t" style="left:77.600px;top:361.74px;font-family:'Liberation Serif',serif;font-style:italic;font-weight:bold;font-size:9px;color:#d01818">f</div><div class="t" style="left:87.800px;top:362.44px">Functions</div><svg style="left:54.6px;top:383.11px" width="4.8" height="5.8" viewBox="0 0 4.8 5.8"><path d="M0 0L4.8 2.9L0 5.8z" fill="#4a4a4a"/></svg><svg style="left:64.8px;top:379.01px" width="13.333" height="13.333" viewBox="0 0 16 16"><defs><linearGradient id="fg" x1="0" y1="0" x2="0" y2="1"><stop offset="0" stop-color="#f8efa6"/><stop offset=".5" stop-color="#ecd75a"/><stop offset="1" stop-color="#c9a91c"/></linearGradient></defs><path d="M.8 3c0-.9.5-1.500 1.400-1.500h3.400l1.500 1.700h6.400c.9 0 1.400.5 1.400 1.400v7.800c0 .9-.5 1.400-1.400 1.400H2.200c-.9 0-1.400-.5-1.400-1.400z" fill="url(#fg)" stroke="#8a7608" stroke-width="1"/><path d="M1.600 4.600h12.600" stroke="#fdf6c4" stroke-width="1"/></svg><div style="left:76px;top:381.21px;width:6.6px;height:6.6px;border-radius:50%;background:#3fae3f;border:.6px solid #1d7a1d"></div><div class="t" style="left:87.800px;top:379.11px">Labels</div><svg style="left:54.6px;top:399.78px" width="4.8" height="5.8" viewBox="0 0 4.8 5.8"><path d="M0 0L4.8 2.9L0 5.8z" fill="#4a4a4a"/></svg><svg style="left:64.8px;top:395.68px" width="13.333" height="13.333" viewBox="0 0 16 16"><defs><linearGradient id="fg" x1="0" y1="0" x2="0" y2="1"><stop offset="0" stop-color="#f8efa6"/><stop offset=".5" stop-color="#ecd75a"/><stop offset="1" stop-color="#c9a91c"/></linearGradient></defs><path d="M.8 3c0-.9.5-1.500 1.400-1.500h3.400l1.500 1.700h6.400c.9 0 1.400.5 1.400 1.400v7.800c0 .9-.5 1.400-1.400 1.400H2.200c-.9 0-1.400-.5-1.400-1.400z" fill="url(#fg)" stroke="#8a7608" stroke-width="1"/><path d="M1.600 4.600h12.600" stroke="#fdf6c4" stroke-width="1"/></svg><div style="left:73.6px;top:397.08px;width:10.8px;height:10.8px;border-radius:50%;background:#2fa83f;border:.7px solid #15701f"></div><div class="t" style="left:75.800px;top:395.98px;font-weight:bold;font-size:8.800px;color:#fff">C</div><div class="t" style="left:87.800px;top:395.78px">Classes</div><svg style="left:54.6px;top:416.45px" width="4.8" height="5.8" viewBox="0 0 4.8 5.8"><path d="M0 0L4.8 2.9L0 5.8z" fill="#4a4a4a"/></svg><svg style="left:64.8px;top:412.35px" width="13.333" height="13.333" viewBox="0 0 16 16"><defs><linearGradient id="fg" x1="0" y1="0" x2="0" y2="1"><stop offset="0" stop-color="#f8efa6"/><stop offset=".5" stop-color="#ecd75a"/><stop offset="1" stop-color="#c9a91c"/></linearGradient></defs><path d="M.8 3c0-.9.5-1.500 1.400-1.500h3.400l1.500 1.700h6.400c.9 0 1.400.5 1.400 1.400v7.800c0 .9-.5 1.400-1.400 1.400H2.200c-.9 0-1.400-.5-1.400-1.400z" fill="url(#fg)" stroke="#8a7608" stroke-width="1"/><path d="M1.600 4.600h12.600" stroke="#fdf6c4" stroke-width="1"/></svg><div class="t" style="left:75.200px;top:413.15px;font-weight:bold;font-size:8.600px;color:#111;letter-spacing:-.3px">{}</div><div class="t" style="left:87.800px;top:412.45px">Namespaces</div><div style="left:49.6px;top:472px;width:217.2px;height:27.6px;border:1px solid #8b8e95;border-right-color:#f2f3f5;border-bottom-color:#f2f3f5;background:#d6d9df"></div><div class="t" style="left:53.3px;top:478.95px;color:#1c1c1c">Filter:</div><div style="left:89.6px;top:476.3px;width:153.4px;height:18.3px;background:#fff;border:1px solid #9a9da4;border-top-color:#7f8289;box-shadow:inset 0 1px 1px #d5d7db"></div><svg style="left:249.500px;top:478.75px" width="13.400" height="13.400" viewBox="0 0 16 16"><path d="M4 1.200h7l3.600 3.600V14.800H4z" fill="#a9cdf6" stroke="#5f9ae6" stroke-width="1"/><path d="M.8 8.200h5M3.800 5.800L6.400 8.200 3.800 10.600" fill="none" stroke="#2f7de0" stroke-width="1.500"/><path d="M8 11.600h4.600" stroke="#fff" stroke-width="1.300"/></svg><div style="left:47px;top:505px;width:221.2px;height:226.3px;background:#d6d9df;border-top:1.600px solid #eef0f3;border-left:1.600px solid #eef0f3;border-right:2px solid #7d8087;border-bottom:2px solid #7d8087"></div><div style="left:48.6px;top:506.7px;width:217.9px;height:19.1px;background:linear-gradient(to right,#a9a9a9 0%,#ababab 30%,#bdbfc3 60%,#d3d6dc 100%);border-bottom:1px solid #8b8e95;border-top:1px solid #8d8d8d;border-left:1px solid #8d8d8d"></div><svg style="left:51.2px;top:509.4px" width="13.333" height="13.333" viewBox="0 0 16 16"><path d="M.8 3.400c0-1 .6-1.600 1.600-1.600h4l1.600 1.800h6c1 0 1.400.6 1.400 1.400v7.800c0 .8-.6 1.400-1.400 1.400H2.200c-.8 0-1.400-.6-1.400-1.400z" fill="#e4bd1c" stroke="#a98708" stroke-width=".9"/><path d="M1.400 5h13.200" stroke="#f6e27a" stroke-width=".9"/><text x="8.200" y="12.400" text-anchor="middle" style="font-family:'DejaVu Sans','Liberation Sans',sans-serif;font-weight:bold;font-size:7.200px" fill="#3a2d00">DT</text></svg><div class="t" style="left:67.5px;top:510.25px;color:#1c1c1c;font-size:10.4px">Data Type Manager</div><div style="left:228.2px;top:509px;width:1px;height:15px;background:#9fa2a8"></div><div style="left:229.2px;top:509px;width:0.7px;height:15px;background:#e2e4e8"></div><svg style="left:234.2px;top:514px" width="8.4" height="5" viewBox="0 0 8.4 5"><path d="M0 0L4.2 5L8.4 0z" fill="#0a0a0a"/></svg><svg style="left:251.9px;top:511.6px" width="9.2" height="9.2" viewBox="0 0 10 10"><path d="M1.300 1.300L8.700 8.700M8.700 1.300L1.300 8.700" stroke="#0a0a0a" stroke-width="2.300" stroke-linecap="butt"/></svg><div style="left:49px;top:525.6px;width:217.8px;height:20.8px;background:#d6d9df;border-bottom:1px solid #9a9da4"></div><svg style="left:51.6px;top:530px" width="13.333" height="13.333" viewBox="0 0 16 16"><path d="M.8 8 L7.200 1.800 V5.400 H15.400 V10.600 H7.200 V14.200 Z" fill="#a1a1a1" stroke="#949494" stroke-width=".8" stroke-linejoin="round"/></svg><svg style="left:70.6px;top:535px" width="4" height="2.5" viewBox="0 0 4 2.5"><path d="M0 0L2.0 2.5L4 0z" fill="#9a9a9a"/></svg><svg style="left:81.6px;top:530px" width="13.333" height="13.333" viewBox="0 0 16 16"><path d="M15.200 8 L8.800 1.800 V5.400 H.6 V10.600 H8.800 V14.200 Z" fill="#a1a1a1" stroke="#949494" stroke-width=".8" stroke-linejoin="round"/></svg><svg style="left:100.6px;top:535px" width="4" height="2.5" viewBox="0 0 4 2.5"><path d="M0 0L2.0 2.5L4 0z" fill="#9a9a9a"/></svg><div style="left:114.2px;top:529px;width:1px;height:15px;background:#9fa2a8"></div><div style="left:115.2px;top:529px;width:0.7px;height:15px;background:#e2e4e8"></div><svg style="left:121.4px;top:530px" width="13.333" height="13.333" viewBox="0 0 16 16"><path d="M3 3.400L6 8.400v3.400h5.600" fill="none" stroke="#f0a020" stroke-width="1.700"/><circle cx="2.800" cy="2.800" r="2" fill="#1f5ff0"/><circle cx="12.400" cy="2.800" r="2" fill="#111"/><circle cx="12.400" cy="11.800" r="2.100" fill="#2fc02f"/></svg><svg style="left:140.8px;top:535px" width="4.2" height="2.6" viewBox="0 0 4.2 2.6"><path d="M0 0L2.1 2.6L4.2 0z" fill="#111"/></svg><div style="left:154.3px;top:529px;width:1px;height:15px;background:#9fa2a8"></div><div style="left:155.3px;top:529px;width:0.7px;height:15px;background:#e2e4e8"></div><div style="left:159.8px;top:528px;width:17.2px;height:17.6px;background:linear-gradient(#f3f4f6,#e4e6ea);border:1px solid #8f9299;border-radius:2px"></div><div style="left:178.8px;top:528px;width:17.2px;height:17.6px;background:linear-gradient(#f3f4f6,#e4e6ea);border:1px solid #8f9299;border-radius:2px"></div><svg style="left:161.8px;top:530.2px" width="13.333" height="13.333" viewBox="0 0 16 16"><text x="8" y="12.200" text-anchor="middle" style="font-family:'DejaVu Sans','Liberation Sans',sans-serif;font-weight:bold;font-size:10px" fill="#222">[]</text><path d="M1.400 1.400L14.600 14.600" stroke="#e01010" stroke-width="1.600"/></svg><svg style="left:180.8px;top:530.2px" width="13.333" height="13.333" viewBox="0 0 16 16"><path d="M2 6.400c2-1.600 5-2 7.400-1.400l4.600.4c1 .2 1 1.600 0 1.800H10c1.400.4 1.400 1.800.2 2 .8.600.4 1.800-.6 1.800.4.800-.2 1.600-1 1.600H5.400C3 12.600 1.600 10.400 1.600 8z" fill="#f4a11c" stroke="#8a5200" stroke-width=".8"/><path d="M1.400 1.400L14.600 14.600" stroke="#e01010" stroke-width="1.600"/></svg><div style="left:200.8px;top:529px;width:1px;height:15px;background:#9fa2a8"></div><div style="left:201.8px;top:529px;width:0.7px;height:15px;background:#e2e4e8"></div><svg style="left:208.3px;top:530.2px" width="13.333" height="13.333" viewBox="0 0 16 16"><rect x="1.200" y=".8" width="10.400" height="10.400" rx="1" fill="#f4f7fc" stroke="#8fb0e4" stroke-width=".9"/><rect x="3.600" y="3.600" width="11.400" height="11.400" rx="1" fill="#fafcff" stroke="#5f8fdc" stroke-width="1"/><path d="M6 9.400h6.600" stroke="#2f68c8" stroke-width="1.700"/></svg><div style="left:50.5px;top:548.4px;width:214.5px;height:149.9px;border:1px solid #9a9da4;background:#fff"></div><svg style="left:55px;top:557px" width="5.6" height="5" viewBox="0 0 5.6 5"><path d="M0 0L2.8 5L5.6 0z" fill="#4a4a4a"/></svg><svg style="left:64.600px;top:552.400px" width="21" height="14" viewBox="0 0 24 16"><path d="M.6 10.400h22.800" stroke="#8a3a12" stroke-width="1.800"/><path d="M4 11l-2.400 4M20 11l2.400 4" stroke="#8a3a12" stroke-width="1.500"/><rect x="4.400" y="1.600" width="3.200" height="8" fill="#e8821c"/><rect x="11" y=".8" width="2.600" height="8.800" fill="#7a5ad0"/><rect x="13.600" y="2" width="2.600" height="7.600" fill="#1f5fe0"/><rect x="16.200" y="1" width="3.600" height="8.600" fill="#1f9a4a"/></svg><div class="t" style="left:86.800px;top:553px">Data Types</div><svg style="left:68.4px;top:574.6px" width="4.8" height="5.8" viewBox="0 0 4.8 5.8"><path d="M0 0L4.8 2.9L0 5.8z" fill="#4a4a4a"/></svg><svg style="left:78.6px;top:570.5px" width="13.333" height="13.333" viewBox="0 0 16 16"><path d="M2.400 3.600L10.600 .8l3 1.400v10.400L5.400 15.400 2.400 14z" fill="#f39a1e" stroke="#b86400" stroke-width=".7" stroke-linejoin="round"/><path d="M2.400 3.600l3 1.400v10.400" fill="none" stroke="#ffd08a" stroke-width=".8"/><path d="M7.200 7l4.600-1.600M7.200 10l4.600-1.600" stroke="#ffe9b0" stroke-width="1.500"/></svg><div class="t" style="left:100.500px;top:570.6px">BuiltInTypes</div><svg style="left:68.4px;top:592px" width="4.8" height="5.8" viewBox="0 0 4.8 5.8"><path d="M0 0L4.8 2.9L0 5.8z" fill="#4a4a4a"/></svg><svg style="left:78.6px;top:587.9px" width="13.333" height="13.333" viewBox="0 0 16 16"><path d="M2.400 3.600L10.600 .8l3 1.400v10.400L5.400 15.400 2.400 14z" fill="#ee3030" stroke="#a80c0c" stroke-width=".7" stroke-linejoin="round"/><path d="M2.400 3.600l3 1.400v10.400" fill="none" stroke="#ffb0a0" stroke-width=".8"/><path d="M7.200 7l4.600-1.600M7.200 10l4.600-1.600" stroke="#ffe27a" stroke-width="1.500"/></svg><div class="t" style="left:100.500px;top:588px">bl2_off.axf</div><svg style="left:68.4px;top:609.5px" width="4.8" height="5.8" viewBox="0 0 4.8 5.8"><path d="M0 0L4.8 2.9L0 5.8z" fill="#4a4a4a"/></svg><svg style="left:78.6px;top:605.4px" width="13.333" height="13.333" viewBox="0 0 16 16"><path d="M2.400 3.600L10.600 .8l3 1.400v10.400L5.400 15.400 2.400 14z" fill="#27a85a" stroke="#0f6e34" stroke-width=".7" stroke-linejoin="round"/><path d="M2.400 3.600l3 1.400v10.400" fill="none" stroke="#9fe2b8" stroke-width=".8"/><path d="M7.200 7l4.600-1.600M7.200 10l4.600-1.600" stroke="#f0e070" stroke-width="1.500"/></svg><div class="t" style="left:100.500px;top:605.5px">generic_clib</div><div style="left:91.6px;top:590.6px;width:7.6px;height:7.6px;border-radius:50%;background:#2f7fd8;border:.6px solid #1b5aa8"></div><svg style="left:92.600px;top:591.600px" width="5.600" height="5.600" viewBox="0 0 6 6"><path d="M1 3l1.500 1.600L5 1.400" fill="none" stroke="#fff" stroke-width="1.200"/></svg><div style="left:49.6px;top:701px;width:217.2px;height:27.4px;border:1px solid #8b8e95;border-right-color:#f2f3f5;border-bottom-color:#f2f3f5;background:#d6d9df"></div><div class="t" style="left:53.3px;top:707.9px;color:#1c1c1c">Filter:</div><div style="left:89.6px;top:705.3px;width:153.4px;height:18.2px;background:#fff;border:1px solid #9a9da4;border-top-color:#7f8289;box-shadow:inset 0 1px 1px #d5d7db"></div><svg style="left:249.500px;top:707.7px" width="13.400" height="13.400" viewBox="0 0 16 16"><path d="M4 1.200h7l3.600 3.600V14.800H4z" fill="#a9cdf6" stroke="#5f9ae6" stroke-width="1"/><path d="M.8 8.200h5M3.800 5.800L6.400 8.200 3.800 10.600" fill="none" stroke="#2f7de0" stroke-width="1.500"/><path d="M8 11.600h4.600" stroke="#fff" stroke-width="1.300"/></svg>
<!-- p_listing -->
<div style="left:271.6px;top:99.8px;width:900.2px;height:492.4px;background:#d6d9df;border-top:1.600px solid #eef0f3;border-left:1.600px solid #eef0f3;border-right:2px solid #7d8087;border-bottom:2px solid #7d8087"></div><div style="left:273.2px;top:101.4px;width:896.9px;height:18.2px;background:linear-gradient(to right,#3a6a90 0%,#4f7a9e 14%,#7797b3 35%,#a6b7c8 59%,#c0c9d4 70%,#d3d6dc 82%,#d6d9df 100%);border-bottom:1px solid #8b8e95;border-left:1px solid #2f5f85"></div><div style="left:273.2px;top:101.4px;width:896.9px;height:1px;background:linear-gradient(to right,#2f5f85 0%,#3f6b91 14%,#6789a8 35%,#94a8bb 59%,#a9b3bf 70%,#a0a3a9 100%)"></div><svg style="left:277px;top:104.600px" width="12" height="11" viewBox="0 0 14 12"><rect x=".6" y=".8" width="12.800" height="10.400" fill="#f4f4f4" stroke="#d8d8d8" stroke-width=".8"/><rect x="1" y="1.200" width="2.600" height="9.600" fill="#5a5a5a"/><path d="M4.600 3h8" stroke="#2b4f9c" stroke-width="1.500"/><path d="M4.600 6h8" stroke="#9fb8e0" stroke-width="1.200"/><path d="M4.600 8.800h8" stroke="#9fd0a8" stroke-width="1.200"/></svg><div class="t" style="left:292.6px;top:104.5px;color:#fff;font-size:10.1px">Listing:  bl2_off.axf</div><svg style="left:971px;top:102.9px" width="13.333" height="13.333" viewBox="0 0 16 16"><path d="M1.400 1h6.400l2.400 2.400v8H1.400z" fill="#f1f1f1" stroke="#c2c2c2" stroke-width=".8"/><path d="M6 4.600h6l2.400 2.400v8H6z" fill="#f7f7f7" stroke="#bcbcbc" stroke-width=".8"/></svg><svg style="left:990px;top:102.9px" width="13.333" height="13.333" viewBox="0 0 16 16"><path d="M1.400 2.600h9.200V13H1.400z" fill="#a8a8a8" stroke="#9c9c9c" stroke-width=".7"/><rect x="3.800" y="1.200" width="4.400" height="2.600" fill="#b4b4b4"/><path d="M6 5.400h6.400l2.200 2.200V15H6z" fill="#adadad" stroke="#9f9f9f" stroke-width=".7"/></svg><div style="left:1010.5px;top:102.5px;width:1px;height:15.5px;background:#9fa2a8"></div><div style="left:1011.5px;top:102.5px;width:0.7px;height:15.5px;background:#e2e4e8"></div><div style="left:1016px;top:102.2px;width:17.8px;height:16.4px;background:linear-gradient(#f8f9fa,#eceef1);border:1px solid #b4b7bd;border-radius:2px"></div><svg style="left:1018.4px;top:102.9px" width="13.333" height="13.333" viewBox="0 0 16 16"><path d="M2.600 1l.2 10.400 2.600-2.400 1.800 4 1.800-.8-1.800-3.800 3.400-.2z" fill="#fff" stroke="#111" stroke-width="1"/><rect x="8.600" y="10.400" width="6.400" height="3.800" fill="#f6d040"/></svg><div style="left:1038.5px;top:102.5px;width:1px;height:15.5px;background:#9fa2a8"></div><div style="left:1039.5px;top:102.5px;width:0.7px;height:15.5px;background:#e2e4e8"></div><svg style="left:1046.2px;top:102.9px" width="13.333" height="13.333" viewBox="0 0 16 16"><rect x="1" y="1.400" width="14" height="6" fill="#fafafa" stroke="#3a3a3a" stroke-width=".9"/><path d="M1 4.400h14M5.600 1.400v6M10.400 1.400v6" stroke="#3a3a3a" stroke-width=".7"/><rect x="5.800" y="4.600" width="4.400" height="2.600" fill="#f3a11c"/><path d="M8 8v6M5.800 12l2.200 2.400 2.200-2.400" fill="none" stroke="#222" stroke-width="1.200"/></svg><svg style="left:1064.8px;top:102.9px" width="13.333" height="13.333" viewBox="0 0 16 16"><path d="M1.400 2h4v12h-4M14.600 2h-4v12h4" fill="none" stroke="#7fb0ee" stroke-width="1.100"/><path d="M3.600 9.400l3 3.400L13 3.600" fill="none" stroke="#27a627" stroke-width="2"/></svg><div style="left:1085.5px;top:102.5px;width:1px;height:15.5px;background:#9fa2a8"></div><div style="left:1086.5px;top:102.5px;width:0.7px;height:15.5px;background:#e2e4e8"></div><svg style="left:1093px;top:102.9px" width="13.333" height="13.333" viewBox="0 0 16 16"><path d="M1 6c0-.8.6-1.400 1.400-1.400h2L5.600 2.400h4.800l1.200 2.200h2c.8 0 1.400.6 1.400 1.400v7.200c0 .8-.6 1.400-1.400 1.400H2.400c-.8 0-1.400-.6-1.400-1.400z" fill="#222" stroke="#000" stroke-width=".6"/><rect x="5.800" y="1" width="4.400" height="2.400" fill="#444"/><circle cx="8" cy="9.600" r="3.600" fill="#3a3a3a" stroke="#8a8a8a" stroke-width=".9"/><circle cx="8" cy="9.600" r="1.600" fill="#111"/><circle cx="7" cy="8.600" r=".8" fill="#cfcfcf"/></svg><div style="left:1113.2px;top:102.5px;width:1px;height:15.5px;background:#9fa2a8"></div><div style="left:1114.2px;top:102.5px;width:0.7px;height:15.5px;background:#e2e4e8"></div><svg style="left:1121px;top:102.9px" width="13.333" height="13.333" viewBox="0 0 16 16"><rect x=".8" y="1.400" width="10" height="13.200" fill="#f6f6f6" stroke="#a8a8a8" stroke-width=".9"/><rect x="2.600" y="8" width="4.800" height="3.600" fill="#8db6f2" stroke="#5f8fdc" stroke-width=".6"/><rect x="10.800" y=".8" width="3.600" height="14.400" fill="#f0a91c" stroke="#b87a00" stroke-width=".7"/></svg><svg style="left:1140.4px;top:109.6px" width="4.2" height="2.6" viewBox="0 0 4.2 2.6"><path d="M0 0L2.1 2.6L4.2 0z" fill="#111"/></svg><div style="left:1149.5px;top:102.5px;width:1px;height:15.5px;background:#9fa2a8"></div><div style="left:1150.5px;top:102.5px;width:0.7px;height:15.5px;background:#e2e4e8"></div><svg style="left:1154.8px;top:106.4px" width="9.2" height="9.2" viewBox="0 0 10 10"><path d="M1.300 1.300L8.700 8.700M8.700 1.300L1.300 8.700" stroke="#0a0a0a" stroke-width="2.300" stroke-linecap="butt"/></svg><div style="left:273.2px;top:120.6px;width:896.9px;height:469.9px;background:#d6d9df"></div><div style="left:279px;top:122.6px;width:2.8px;height:451.4px;background:#a9abaf"></div><div style="left:286.6px;top:120.6px;width:58.6px;height:469.9px;background:#fff"></div><div style="left:345.2px;top:120.6px;width:5.4px;height:470.1px;background:#d3d6dc;border-left:1px solid #c4c7cd;border-right:1px solid #b9bcc2"></div><div style="left:346.2px;top:345px;width:3.4px;height:16px;background:#c2c5cb;border:1px solid #a9acb2;border-radius:1.500px"></div><div style="left:350.6px;top:121.6px;width:791.4px;height:454px;background:#fff;border-top:1px solid #c2c5cb"></div><svg style="left:286px;top:121px" width="59.200" height="469.700" viewBox="286 121 59.200 469.700"><path d="M345 123.600H315.200V258.200H336" fill="none" stroke="#c6c6c6" stroke-width="1" stroke-dasharray="4.200 2.500"/><path d="M338.500 254.8L345 258.2L338.500 261.6z" fill="#c6c6c6"/><path d="M345 228.400H335.400V121" fill="none" stroke="#c6c6c6" stroke-width="1"/><path d="M332.600 123l2.800 4 2.800-4z" fill="#c6c6c6"/><path d="M332.600 127l2.800-4 2.800 4z" fill="#c6c6c6" opacity=".6"/><path d="M323.8 153.7H338" stroke="#c6c6c6" stroke-width="1"/><path d="M338.500 150.3L345 153.7L338.500 157.1z" fill="#c6c6c6"/><path d="M334.40000000000003 408.6H338" stroke="#c6c6c6" stroke-width="1"/><path d="M338.500 405.2L345 408.6L338.500 412z" fill="#c6c6c6"/><path d="M334.40000000000003 528.7H338" stroke="#c6c6c6" stroke-width="1"/><path d="M338.500 525.3L345 528.7L338.500 532.1z" fill="#c6c6c6"/><path d="M336 198.200H325.400V574" fill="none" stroke="#c6c6c6" stroke-width="1" stroke-dasharray="4.200 2.500"/><path d="M338.500 194.8L345 198.2L338.500 201.6z" fill="#c6c6c6"/><path d="M345 378.800H315.200V453.800H336" fill="none" stroke="#c6c6c6" stroke-width="1" stroke-dasharray="4.200 2.500"/><path d="M338.500 450.4L345 453.8L338.500 457.2z" fill="#c6c6c6"/><path d="M345 498.600H315.200V573.600H336" fill="none" stroke="#c6c6c6" stroke-width="1" stroke-dasharray="4.200 2.500"/><path d="M338.500 570.2L345 573.6L338.500 577z" fill="#c6c6c6"/></svg><div style="left:350.6px;top:122.4px;width:791.4px;height:453.2px;overflow:hidden"><div class="m" style="left:48.1px;top:-5.3px"><span style="color:#000">100005f2</span></div><div class="m" style="left:100.4px;top:-5.3px"><span style="color:#1a1aff">10 b1</span></div><div class="m" style="left:191.7px;top:-5.3px"><span style="color:#000080">cbz</span></div><div class="m" style="left:258.9px;top:-5.3px"><span style="color:#800080">fih_rc</span><span style="color:#000">,</span><span style="color:#1a1aff">FIH_LABEL_FIH_CALL_START_176</span></div><div class="m" style="left:166.9px;top:24.7px"><span style="color:#1a1aff">LAB_100005f4</span></div><div class="m" style="left:449px;top:24.7px"><span style="color:#1f861f">XREF[1]:</span></div><div class="m" style="left:524.1px;top:24.7px"><span style="color:#1f861f">100005f4(j)</span></div><div class="m" style="left:48.1px;top:39.7px"><span style="color:#000">100005f4</span></div><div class="m" style="left:100.4px;top:39.7px"><span style="color:#1a1aff">fe e7</span></div><div class="m" style="left:191.7px;top:39.7px"><span style="color:#000080">b</span></div><div class="m" style="left:258.9px;top:39.7px"><span style="color:#1a1aff">LAB_100005f4</span></div><div class="m" style="left:166.9px;top:69.7px"><span style="color:#1a1aff">LAB_100005f6</span></div><div class="m" style="left:449px;top:69.7px"><span style="color:#1f861f">XREF[1]:</span></div><div class="m" style="left:524.1px;top:69.7px"><span style="color:#1f861f">10000616(j)</span></div><div class="m" style="left:48.1px;top:84.7px"><span style="color:#000">100005f6</span></div><div class="m" style="left:100.4px;top:84.7px"><span style="color:#1a1aff">04 46</span></div><div class="m" style="left:191.7px;top:84.7px"><span style="color:#000080">mov</span></div><div class="m" style="left:258.9px;top:84.7px"><span style="color:#800080">image_id</span><span style="color:#000">,</span><span style="color:#800080">fih_rc</span></div><div class="m" style="left:48.1px;top:99.7px"><span style="color:#000">100005f8</span></div><div class="m" style="left:100.4px;top:99.7px"><span style="color:#1a1aff">f8 e7</span></div><div class="m" style="left:191.7px;top:99.7px"><span style="color:#000080">b</span></div><div class="m" style="left:258.9px;top:99.7px"><span style="color:#1a1aff">LAB_100005ec</span></div><div class="m" style="left:166.9px;top:129.7px"><span style="color:#1a1aff">FIH_LABEL_FIH_CALL_START_176</span></div><div class="m" style="left:449px;top:129.7px"><span style="color:#1f861f">XREF[1]:</span></div><div class="m" style="left:524.1px;top:129.7px"><span style="color:#1f861f">100005f2(j)</span></div><div class="m" style="left:48.1px;top:144.7px"><span style="color:#000">100005fa</span></div><div class="m" style="left:100.4px;top:144.7px"><span style="color:#1a1aff">21 46</span></div><div class="m" style="left:191.7px;top:144.7px"><span style="color:#000080">mov</span></div><div class="m" style="left:258.9px;top:144.7px"><span style="color:#808000">r1</span><span style="color:#000">,</span><span style="color:#800080">image_id</span></div><div class="m" style="left:48.1px;top:159.7px"><span style="color:#000">100005fc</span></div><div class="m" style="left:100.4px;top:159.7px"><span style="color:#1a1aff">01 a8</span></div><div class="m" style="left:191.7px;top:159.7px"><span style="color:#000080">add</span></div><div class="m" style="left:258.9px;top:159.7px"><span style="color:#800080">fih_rc</span><span style="color:#000">,</span><span style="color:#808000">sp</span><span style="color:#000">,</span><span style="color:#000">#</span><span style="color:#0a7a0a">0x4</span></div><div class="m" style="left:48.1px;top:174.7px"><span style="color:#000">100005fe</span></div><div class="m" style="left:100.4px;top:174.7px"><span style="color:#1a1aff">00 f0 0d fd</span></div><div class="m" style="left:191.7px;top:174.7px"><span style="color:#000080">bl</span></div><div class="m" style="left:258.9px;top:174.7px"><span style="color:#ff00ff">boot_go_for_image_id</span></div><div class="m" style="left:542.4px;top:174.7px"><span style="color:#bababa">fih_int boot_go_for_image_id(boo<span style="font-family:'DejaVu Sans',sans-serif">…</span></span></div><div class="m" style="left:166.9px;top:204.7px"><span style="color:#000">FIH_LABEL_FIH_CALL_END_190</span></div><div class="m" style="left:48.1px;top:219.7px"><span style="color:#000">10000602</span></div><div class="m" style="left:100.4px;top:219.7px"><span style="color:#1a1aff">2b 68</span></div><div class="m" style="left:191.7px;top:219.7px"><span style="color:#000080">ldr</span></div><div class="m" style="left:258.9px;top:219.7px"><span style="color:#808000">r3</span><span style="color:#000">,</span><span style="color:#000">[</span><span style="color:#808000">r5</span><span style="color:#000">,</span><span style="color:#000">#</span><span style="color:#0a7a0a">0x0</span><span style="color:#000">]</span><span style="color:#ff40d0">=&gt;FIH_SUCCESS</span></div><div class="m" style="left:542.4px;top:219.7px"><span style="color:#bababa">= ??</span></div><div class="m" style="left:48.1px;top:234.7px"><span style="color:#000">10000604</span></div><div class="m" style="left:100.4px;top:234.7px"><span style="color:#1a1aff">83 42</span></div><div class="m" style="left:191.7px;top:234.7px"><span style="color:#000080">cmp</span></div><div class="m" style="left:258.9px;top:234.7px"><span style="color:#808000">r3</span><span style="color:#000">,</span><span style="color:#800080">fih_rc</span></div><div class="m" style="left:48.1px;top:249.7px"><span style="color:#000">10000606</span></div><div class="m" style="left:100.4px;top:249.7px"><span style="color:#1a1aff">00 d0</span></div><div class="m" style="left:191.7px;top:249.7px"><span style="color:#000080">beq</span></div><div class="m" style="left:258.9px;top:249.7px"><span style="color:#1a1aff">LAB_1000060a</span></div><div class="m" style="left:166.9px;top:279.7px"><span style="color:#1a1aff">LAB_10000608</span></div><div class="m" style="left:449px;top:279.7px"><span style="color:#1f861f">XREF[1]:</span></div><div class="m" style="left:524.1px;top:279.7px"><span style="color:#1f861f">10000608(j)</span></div><div class="m" style="left:48.1px;top:294.7px"><span style="color:#000">10000608</span></div><div class="m" style="left:100.4px;top:294.7px"><span style="color:#1a1aff">fe e7</span></div><div class="m" style="left:191.7px;top:294.7px"><span style="color:#000080">b</span></div><div class="m" style="left:258.9px;top:294.7px"><span style="color:#1a1aff">LAB_10000608</span></div><div class="m" style="left:166.9px;top:324.7px"><span style="color:#1a1aff">LAB_1000060a</span></div><div class="m" style="left:449px;top:324.7px"><span style="color:#1f861f">XREF[1]:</span></div><div class="m" style="left:524.1px;top:324.7px"><span style="color:#1f861f">10000606(j)</span></div><div class="m" style="left:48.1px;top:339.7px"><span style="color:#000">1000060a</span></div><div class="m" style="left:100.4px;top:339.7px"><span style="color:#1a1aff">20 46</span></div><div class="m" style="left:191.7px;top:339.7px"><span style="color:#000080">mov</span></div><div class="m" style="left:258.9px;top:339.7px"><span style="color:#800080">fih_rc</span><span style="color:#000">,</span><span style="color:#800080">image_id</span></div><div class="m" style="left:48.1px;top:354.7px"><span style="color:#000">1000060c</span></div><div class="m" style="left:100.4px;top:354.7px"><span style="color:#1a1aff">01 f0 56 fb</span></div><div class="m" style="left:191.7px;top:354.7px"><span style="color:#000080">bl</span></div><div class="m" style="left:258.9px;top:354.7px"><span style="color:#ff00ff">boot_platform_post_load</span></div><div class="m" style="left:542.4px;top:354.7px"><span style="color:#bababa">undefined boot_platform_post_loa<span style="font-family:'DejaVu Sans',sans-serif">…</span></span></div><div class="m" style="left:48.1px;top:369.7px"><span style="color:#000">10000610</span></div><div class="m" style="left:100.4px;top:369.7px"><span style="color:#1a1aff">00 b1</span></div><div class="m" style="left:191.7px;top:369.7px"><span style="color:#000080">cbz</span></div><div class="m" style="left:258.9px;top:369.7px"><span style="color:#800080">fih_rc</span><span style="color:#000">,</span><span style="color:#1a1aff">LAB_10000614</span></div><div class="m" style="left:166.9px;top:399.7px"><span style="color:#1a1aff">LAB_10000612</span></div><div class="m" style="left:449px;top:399.7px"><span style="color:#1f861f">XREF[1]:</span></div><div class="m" style="left:524.1px;top:399.7px"><span style="color:#1f861f">10000612(j)</span></div><div class="m" style="left:48.1px;top:414.7px"><span style="color:#000">10000612</span></div><div class="m" style="left:100.4px;top:414.7px"><span style="color:#1a1aff">fe e7</span></div><div class="m" style="left:191.7px;top:414.7px"><span style="color:#000080">b</span></div><div class="m" style="left:258.9px;top:414.7px"><span style="color:#1a1aff">LAB_10000612</span></div><div class="m" style="left:166.9px;top:444.7px"><span style="color:#1a1aff">LAB_10000614</span></div><div class="m" style="left:449px;top:444.7px"><span style="color:#1f861f">XREF[1]:</span></div><div class="m" style="left:524.1px;top:444.7px"><span style="color:#1f861f">10000610(j)</span></div></div><div style="left:1142px;top:122.4px;width:12px;height:453.2px;overflow:hidden"><div style="left:0px;top:0px;width:12px;height:453.2px;background:linear-gradient(to right,#c6c9cf,#e0e2e7 45%,#e4e6eb)"></div><div style="left:-7px;top:13.6px;width:18.6px;height:426px;border-radius:6.500px;background:linear-gradient(to right,#999ca2 0%,#a4a7ad 45%,#c2c5cb 75%,#d2d5db 100%);box-shadow:inset 0 -4px 3px -1.500px #3f4146, inset 0 1px 1px #8d9096"></div><div style="left:-8px;top:14.4px;width:19.8px;height:25.2px;border-radius:0 12px 12px 0 / 0 12.600px 12.600px 0;border:1px solid #3f5f82;background:linear-gradient(to right,#bdd3e8 0%,#c9dcec 45%,#dbe8f3 70%,#b0cae2 100%);box-shadow:inset 0 0 1.500px #f4f8fc"></div><svg style="left:2.8px;top:4.2px" width="6" height="5.2" viewBox="0 0 6 5.2"><path d="M0 5.2L3.0 0L6 5.2z" fill="#2b2b2b"/></svg><svg style="left:2.8px;top:443.8px" width="6" height="5.2" viewBox="0 0 6 5.2"><path d="M0 0L3.0 5.2L6 0z" fill="#2b2b2b"/></svg></div><div style="left:351px;top:575.6px;width:791px;height:13px;overflow:hidden"><div style="left:0px;top:0px;width:791px;height:13px;background:linear-gradient(#c6c9cf,#e0e2e7 45%,#e4e6eb)"></div><div style="left:13.6px;top:-7px;width:763.8px;height:19.2px;border-radius:6.500px;background:linear-gradient(#999ca2 0%,#a4a7ad 45%,#c2c5cb 75%,#d2d5db 100%);box-shadow:inset -4px 0 3px -1.500px #3f4146, inset 1px 0 1px #8d9096"></div><div style="left:13.6px;top:-8px;width:695.2px;height:20.2px;border-radius:0 0 10px 10px / 0 0 11px 11px;border:1px solid #3f5f82;background:linear-gradient(#dfeaf4 0%,#c6d9ea 35%,#aec8df 70%,#bcd2e6 100%);box-shadow:inset 0 0 1.500px #f4f8fc"></div><svg style="left:4px;top:3.3px" width="5.2" height="6" viewBox="0 0 5.2 6"><path d="M5.2 0L0 3.0L5.2 6z" fill="#2b2b2b"/></svg><svg style="left:781.8px;top:3.3px" width="5.2" height="6" viewBox="0 0 5.2 6"><path d="M0 0L5.2 3.0L0 6z" fill="#2b2b2b"/></svg></div><div style="left:1142px;top:575.6px;width:12px;height:13px;background:#d6d9df"></div><div style="left:1154px;top:122.4px;width:14.4px;height:466.2px;background:#dcdfe4;border-left:1px solid #c9ccd2"></div><div style="left:1160.2px;top:143px;width:6.4px;height:33px;background:#b3b5ba"></div><div style="left:1154.4px;top:145px;width:8.6px;height:10px;background:#f7e9ea;border:1.300px solid #e0405a"></div><div style="left:1155px;top:149.35px;width:7.4px;height:1.3px;background:#e0405a"></div><div style="left:1154.4px;top:163px;width:8.6px;height:7.4px;background:#fbe9c4;border:1.300px solid #f0a830"></div><div style="left:1155px;top:166.1px;width:7.4px;height:1.2px;background:#f0a830"></div><div style="left:1160.2px;top:183px;width:6.8px;height:1.6px;background:#b3b5ba"></div><div style="left:1160.2px;top:211px;width:6.8px;height:10.2px;background:#b3b5ba"></div><div style="left:1160.2px;top:516px;width:6.8px;height:1.6px;background:#b3b5ba"></div>
<!-- p_decomp -->
<div style="left:1174.8px;top:99.8px;width:423.8px;height:492.4px;background:#d6d9df;border-top:1.600px solid #eef0f3;border-left:1.600px solid #eef0f3;border-right:2px solid #7d8087;border-bottom:2px solid #7d8087"></div><div style="left:1176.5px;top:101.4px;width:420.4px;height:18.2px;background:linear-gradient(to right,#a9a9a9 0%,#ababab 30%,#bdbfc3 60%,#d3d6dc 100%);border-bottom:1px solid #8b8e95;border-top:1px solid #8d8d8d;border-left:1px solid #8d8d8d"></div><svg style="left:1179px;top:103.600px" width="14" height="14" viewBox="0 0 16 16"><text x="6" y="11.400" text-anchor="middle" style="font-family:'DejaVu Sans','Liberation Sans',sans-serif;font-weight:bold;font-size:13.500px" fill="#2f7bff">C</text><text x="12.400" y="15" text-anchor="middle" style="font-family:'Liberation Serif',serif;font-weight:bold;font-style:italic;font-size:11px" fill="#e31cc4">f</text></svg><div class="t" style="left:1196px;top:104.5px;color:#1c1c1c;font-size:10.4px">Decompile: main - (bl2_off.axf)</div><svg style="left:1458.8px;top:102.9px" width="13.333" height="13.333" viewBox="0 0 16 16"><path d="M13.800 6.600A6 6 0 0 0 3.200 4.200L1.400 2.600v5.200h5.400L4.800 5.800a3.800 3.800 0 0 1 6.600 1.400z" fill="#27a627" stroke="#0f6e0f" stroke-width=".7" stroke-linejoin="round"/><path d="M2.200 9.400a6 6 0 0 0 10.600 2.400l1.800 1.600V8.200H9.200l2 2a3.800 3.800 0 0 1-6.600-1.400z" fill="#27a627" stroke="#0f6e0f" stroke-width=".7" stroke-linejoin="round"/></svg><div style="left:1478.5px;top:102.5px;width:1px;height:15.5px;background:#9fa2a8"></div><div style="left:1479.5px;top:102.5px;width:0.7px;height:15.5px;background:#e2e4e8"></div><svg style="left:1486px;top:102.9px" width="13.333" height="13.333" viewBox="0 0 16 16"><path d="M1.400 1h6.400l2.400 2.400v8H1.400z" fill="#f1f1f1" stroke="#c2c2c2" stroke-width=".8"/><path d="M6 4.600h6l2.400 2.400v8H6z" fill="#f7f7f7" stroke="#bcbcbc" stroke-width=".8"/></svg><div style="left:1507px;top:102.5px;width:1px;height:15.5px;background:#9fa2a8"></div><div style="left:1508px;top:102.5px;width:0.7px;height:15.5px;background:#e2e4e8"></div><svg style="left:1515.2px;top:102.9px" width="13.333" height="13.333" viewBox="0 0 16 16"><path d="M1.600 1h9l3.200 3.200V15H1.600z" fill="#dce9fb" stroke="#7fa6e6" stroke-width=".9"/><path d="M12.600 2.400l2 1.600-6.600 8-2.800 1.200.6-3z" fill="#f4b02a" stroke="#b87a00" stroke-width=".7" stroke-linejoin="round"/><path d="M5.200 13.200l.6-3 2.200 1.800z" fill="#f6d9b0"/></svg><div style="left:1535.2px;top:102.5px;width:1px;height:15.5px;background:#9fa2a8"></div><div style="left:1536.2px;top:102.5px;width:0.7px;height:15.5px;background:#e2e4e8"></div><svg style="left:1542.6px;top:102.9px" width="13.333" height="13.333" viewBox="0 0 16 16"><path d="M1 6c0-.8.6-1.400 1.400-1.400h2L5.600 2.400h4.800l1.200 2.200h2c.8 0 1.400.6 1.400 1.400v7.200c0 .8-.6 1.400-1.400 1.400H2.400c-.8 0-1.400-.6-1.400-1.400z" fill="#222" stroke="#000" stroke-width=".6"/><rect x="5.800" y="1" width="4.400" height="2.400" fill="#444"/><circle cx="8" cy="9.600" r="3.600" fill="#3a3a3a" stroke="#8a8a8a" stroke-width=".9"/><circle cx="8" cy="9.600" r="1.600" fill="#111"/><circle cx="7" cy="8.600" r=".8" fill="#cfcfcf"/></svg><div style="left:1559.5px;top:102.5px;width:1px;height:15.5px;background:#9fa2a8"></div><div style="left:1560.5px;top:102.5px;width:0.7px;height:15.5px;background:#e2e4e8"></div><svg style="left:1565.6px;top:107.8px" width="8.4" height="5" viewBox="0 0 8.4 5"><path d="M0 0L4.2 5L8.4 0z" fill="#0a0a0a"/></svg><svg style="left:1582.8px;top:106.4px" width="9.2" height="9.2" viewBox="0 0 10 10"><path d="M1.300 1.300L8.700 8.700M8.700 1.300L1.300 8.700" stroke="#0a0a0a" stroke-width="2.300" stroke-linecap="butt"/></svg><div style="left:1176.8px;top:120.6px;width:15.2px;height:470.1px;background:#d6d9df;border-right:1px solid #b4b7bd"></div><div style="left:1192.6px;top:121.8px;width:389.8px;height:453.8px;background:#fff"></div><div class="m" style="left:1170px;top:122.2px;width:18.600px;text-align:right;color:#111">1</div><div class="m" style="left:1170px;top:137.2px;width:18.600px;text-align:right;color:#111">2</div><div class="m" style="left:1170px;top:152.2px;width:18.600px;text-align:right;color:#111">3</div><div class="m" style="left:1170px;top:167.2px;width:18.600px;text-align:right;color:#111">4</div><div class="m" style="left:1170px;top:182.2px;width:18.600px;text-align:right;color:#111">5</div><div class="m" style="left:1170px;top:197.2px;width:18.600px;text-align:right;color:#111">6</div><div class="m" style="left:1170px;top:212.2px;width:18.600px;text-align:right;color:#111">7</div><div class="m" style="left:1170px;top:227.2px;width:18.600px;text-align:right;color:#111">8</div><div class="m" style="left:1170px;top:242.2px;width:18.600px;text-align:right;color:#111">9</div><div class="m" style="left:1170px;top:257.2px;width:18.600px;text-align:right;color:#111">10</div><div class="m" style="left:1170px;top:272.2px;width:18.600px;text-align:right;color:#111">11</div><div class="m" style="left:1170px;top:287.2px;width:18.600px;text-align:right;color:#111">12</div><div class="m" style="left:1170px;top:302.2px;width:18.600px;text-align:right;color:#111">13</div><div class="m" style="left:1170px;top:317.2px;width:18.600px;text-align:right;color:#111">14</div><div class="m" style="left:1170px;top:332.2px;width:18.600px;text-align:right;color:#111">15</div><div class="m" style="left:1170px;top:347.2px;width:18.600px;text-align:right;color:#111">16</div><div class="m" style="left:1170px;top:362.2px;width:18.600px;text-align:right;color:#111">17</div><div class="m" style="left:1170px;top:377.2px;width:18.600px;text-align:right;color:#111">18</div><div class="m" style="left:1170px;top:392.2px;width:18.600px;text-align:right;color:#111">19</div><div class="m" style="left:1170px;top:407.2px;width:18.600px;text-align:right;color:#111">20</div><div class="m" style="left:1170px;top:422.2px;width:18.600px;text-align:right;color:#111">21</div><div class="m" style="left:1170px;top:437.2px;width:18.600px;text-align:right;color:#111">22</div><div class="m" style="left:1170px;top:452.2px;width:18.600px;text-align:right;color:#111">23</div><div class="m" style="left:1170px;top:467.2px;width:18.600px;text-align:right;color:#111">24</div><div class="m" style="left:1170px;top:482.2px;width:18.600px;text-align:right;color:#111">25</div><div class="m" style="left:1170px;top:497.2px;width:18.600px;text-align:right;color:#111">26</div><div class="m" style="left:1170px;top:512.2px;width:18.600px;text-align:right;color:#111">27</div><div class="m" style="left:1170px;top:527.2px;width:18.600px;text-align:right;color:#111">28</div><div class="m" style="left:1170px;top:542.2px;width:18.600px;text-align:right;color:#111">29</div><div class="m" style="left:1170px;top:557.2px;width:18.600px;text-align:right;color:#111">30</div><div style="left:1192.6px;top:121.8px;width:389.8px;height:453.8px;overflow:hidden"><div style="left:0.4px;top:44.8px;width:17.8px;height:15px;background:#ffff78"></div><div class="m" style="left:0px;top:15.4px"><span style="color:#a23cdc">/* WARNING: Unknown calling convention */</span></div><div class="m" style="left:0px;top:45.4px"><span style="color:#1a1aff">int</span> <span style="color:#1a1aff">main</span><span style="color:#1e1e1e">(</span><span style="color:#1a1aff">void</span><span style="color:#1e1e1e">)</span></div><div class="m" style="left:0px;top:75.4px"><span style="color:#1e1e1e">{</span></div><div class="m" style="left:0px;top:90.4px">  <span style="color:#1a1aff">int32_t</span> <span style="color:#1e1e1e"></span><span style="color:#8c8c00">iVar1</span><span style="color:#1e1e1e">;</span></div><div class="m" style="left:0px;top:105.4px">  <span style="color:#1a1aff">tfm_plat_err_t</span> <span style="color:#1e1e1e"></span><span style="color:#8c8c00">tVar2</span><span style="color:#1e1e1e">;</span></div><div class="m" style="left:0px;top:120.4px">  <span style="color:#1a1aff">tfm_plat_err_t</span> <span style="color:#1e1e1e"></span><span style="color:#8c8c00">plat_err</span><span style="color:#1e1e1e">;</span></div><div class="m" style="left:0px;top:135.4px">  <span style="color:#1a1aff">int</span> <span style="color:#1e1e1e"></span><span style="color:#8c8c00">iVar3</span><span style="color:#1e1e1e">;</span></div><div class="m" style="left:0px;top:150.4px">  <span style="color:#1a1aff">fih_int</span> <span style="color:#1e1e1e"></span><span style="color:#8c8c00">fVar4</span><span style="color:#1e1e1e">;</span></div><div class="m" style="left:0px;top:165.4px">  <span style="color:#1a1aff">fih_int</span> <span style="color:#1e1e1e"></span><span style="color:#8c8c00">fih_rc</span><span style="color:#1e1e1e">;</span></div><div class="m" style="left:0px;top:180.4px">  <span style="color:#1a1aff">boot_arm_vector_table</span> <span style="color:#1e1e1e">*</span><span style="color:#8c8c00">vt</span><span style="color:#1e1e1e">;</span></div><div class="m" style="left:0px;top:195.4px">  <span style="color:#1a1aff">uint32_t</span> <span style="color:#1e1e1e"></span><span style="color:#8c8c00">uVar5</span><span style="color:#1e1e1e">;</span></div><div class="m" style="left:0px;top:210.4px">  <span style="color:#1a1aff">int32_t</span> <span style="color:#1e1e1e"></span><span style="color:#8c8c00">image_id</span><span style="color:#1e1e1e">;</span></div><div class="m" style="left:0px;top:225.4px">  <span style="color:#1a1aff">uintptr_t</span> <span style="color:#1e1e1e"></span><span style="color:#8c8c00">flash_base</span><span style="color:#1e1e1e">;</span></div><div class="m" style="left:0px;top:240.4px">  <span style="color:#1a1aff">boot_rsp</span> <span style="color:#1e1e1e"></span><span style="color:#8c8c00">rsp</span><span style="color:#1e1e1e">;</span></div><div class="m" style="left:0px;top:270.4px">  <span style="color:#1a1aff">mbedtls_memory_buffer_alloc_init</span><span style="color:#1e1e1e">(</span><span style="color:#0a9090">mbedtls_mem_buf</span><span style="color:#1e1e1e">,</span><span style="color:#0a8a0a">0x2000</span><span style="color:#1e1e1e">);</span></div><div class="m" style="left:0px;top:285.4px">  <span style="color:#8c8c00">iVar1</span><span style="color:#1e1e1e"> = </span><span style="color:#1a1aff">boot_platform_init</span><span style="color:#1e1e1e">();</span></div><div class="m" style="left:0px;top:300.4px">  <span style="color:#1a1aff">if</span><span style="color:#1e1e1e"> (</span><span style="color:#8c8c00">iVar1</span><span style="color:#1e1e1e"> != </span><span style="color:#0a8a0a">0</span><span style="color:#1e1e1e">) {</span></div><div class="m" style="left:0px;top:315.4px">    <span style="color:#1a1aff">do</span><span style="color:#1e1e1e"> {</span></div><div class="m" style="left:0px;top:330.4px">                    <span style="color:#a23cdc">/* WARNING: Do nothing block with infinite loop */</span></div><div class="m" style="left:0px;top:345.4px">    <span style="color:#1e1e1e">} </span><span style="color:#1a1aff">while</span><span style="color:#1e1e1e">( </span><span style="color:#0a8a0a">true</span><span style="color:#1e1e1e"> );</span></div><div class="m" style="left:0px;top:360.4px">  <span style="color:#1e1e1e">}</span></div><div class="m" style="left:0px;top:375.4px">  <span style="color:#8c8c00">tVar2</span><span style="color:#1e1e1e"> = </span><span style="color:#1a1aff">tfm_plat_otp_init</span><span style="color:#1e1e1e">();</span></div><div class="m" style="left:0px;top:390.4px">  <span style="color:#1a1aff">if</span><span style="color:#1e1e1e"> (</span><span style="color:#8c8c00">tVar2</span><span style="color:#1e1e1e"> != </span><span style="color:#0a8a0a">TFM_PLAT_ERR_SUCCESS</span><span style="color:#1e1e1e">) {</span></div><div class="m" style="left:0px;top:405.4px">    <span style="color:#1a1aff">do</span><span style="color:#1e1e1e"> {</span></div><div class="m" style="left:0px;top:420.4px">                    <span style="color:#a23cdc">/* WARNING: Do nothing block with infinite loop */</span></div><div class="m" style="left:0px;top:435.4px">    <span style="color:#1e1e1e">} </span><span style="color:#1a1aff">while</span><span style="color:#1e1e1e">( </span><span style="color:#0a8a0a">true</span><span style="color:#1e1e1e"> );</span></div><div style="left:0px;top:44.8px;width:2.4px;height:15px;background:#e8141c"></div></div><div style="left:1582.4px;top:121.8px;width:13.4px;height:453.8px;overflow:hidden"><div style="left:0px;top:0px;width:13.4px;height:453.8px;background:linear-gradient(to right,#c6c9cf,#e0e2e7 45%,#e4e6eb)"></div><div style="left:-7px;top:13.6px;width:20px;height:426.6px;border-radius:6.500px;background:linear-gradient(to right,#999ca2 0%,#a4a7ad 45%,#c2c5cb 75%,#d2d5db 100%);box-shadow:inset 0 -4px 3px -1.500px #3f4146, inset 0 1px 1px #8d9096"></div><div style="left:-8px;top:13.6px;width:21.2px;height:144.6px;border-radius:0 11px 11px 0 / 0 9px 9px 0;border:1px solid #3f5f82;background:linear-gradient(to right,#bdd3e8 0%,#c9dcec 45%,#dbe8f3 70%,#b0cae2 100%);box-shadow:inset 0 0 1.500px #f4f8fc"></div><svg style="left:3.5px;top:4.2px" width="6" height="5.2" viewBox="0 0 6 5.2"><path d="M0 5.2L3.0 0L6 5.2z" fill="#2b2b2b"/></svg><svg style="left:3.5px;top:444.4px" width="6" height="5.2" viewBox="0 0 6 5.2"><path d="M0 0L3.0 5.2L6 0z" fill="#2b2b2b"/></svg></div><div style="left:1192.6px;top:575.6px;width:389.8px;height:13px;overflow:hidden"><div style="left:0px;top:0px;width:389.8px;height:13px;background:linear-gradient(#c6c9cf,#e0e2e7 45%,#e4e6eb)"></div><div style="left:13.6px;top:-7px;width:362.6px;height:19.2px;border-radius:6.500px;background:linear-gradient(#999ca2 0%,#a4a7ad 45%,#c2c5cb 75%,#d2d5db 100%);box-shadow:inset -4px 0 3px -1.500px #3f4146, inset 1px 0 1px #8d9096"></div><div style="left:13.2px;top:-8px;width:242.2px;height:20.2px;border-radius:0 0 10px 10px / 0 0 11px 11px;border:1px solid #3f5f82;background:linear-gradient(#dfeaf4 0%,#c6d9ea 35%,#aec8df 70%,#bcd2e6 100%);box-shadow:inset 0 0 1.500px #f4f8fc"></div><svg style="left:4px;top:3.3px" width="5.2" height="6" viewBox="0 0 5.2 6"><path d="M5.2 0L0 3.0L5.2 6z" fill="#2b2b2b"/></svg><svg style="left:380.6px;top:3.3px" width="5.2" height="6" viewBox="0 0 5.2 6"><path d="M0 0L5.2 3.0L0 6z" fill="#2b2b2b"/></svg></div><div style="left:1582.4px;top:575.6px;width:14.4px;height:13px;background:#d6d9df"></div>
<!-- p_console -->
<div style="left:271.6px;top:596.2px;width:1327px;height:135.1px;background:#d6d9df;border-top:1.600px solid #eef0f3;border-left:1.600px solid #eef0f3;border-right:2px solid #7d8087;border-bottom:2px solid #7d8087"></div><div style="left:273.2px;top:597.6px;width:1323.7px;height:19.8px;background:linear-gradient(to right,#a9a9a9 0%,#ababab 30%,#bdbfc3 60%,#d3d6dc 100%);border-bottom:1px solid #8b8e95;border-top:1px solid #8d8d8d;border-left:1px solid #8d8d8d"></div><svg style="left:277px;top:600.6px" width="13.333" height="13.333" viewBox="0 0 16 16"><rect x="1.600" y="1.200" width="12.400" height="9.200" rx="1" fill="#5f93e6" stroke="#c9d3e2" stroke-width="1"/><path d="M2.400 2h10.800v3.400C9 6 6 4 2.400 5z" fill="#8db6f2"/><path d="M7.800 10.600v2.600M4.400 14h6.800" stroke="#e8eaee" stroke-width="1.500"/></svg><div class="t" style="left:292.8px;top:601.5px;color:#1c1c1c;font-size:10.4px">Console - Scripting</div><svg style="left:1543.4px;top:600.4px" width="13.333" height="13.333" viewBox="0 0 16 16"><rect x="2.400" y="7" width="11.200" height="7.800" rx="1" fill="#f7cf5a" stroke="#c99a1c" stroke-width=".9"/><path d="M4.800 7V5c0-2 1.400-3.400 3.200-3.400s3.200 1.400 3.200 3.400v2" fill="none" stroke="#c8c8c8" stroke-width="1.500"/><rect x="4" y="10" width="8" height="3" fill="#fbe9a8"/><path d="M6 10.400v2.200M8 10.400v2.200M10 10.400v2.200" stroke="#c99a1c" stroke-width=".8"/></svg><svg style="left:1562px;top:600.4px" width="13.333" height="13.333" viewBox="0 0 16 16"><path d="M8.600 1l5 2-5.600 10.800-5-2.400z" fill="#f4b52a" stroke="#9a6a00" stroke-width=".8" stroke-linejoin="round"/><path d="M3 11.400l5 2.400-1 1.600-5-2.200z" fill="#f6a6b6" stroke="#c06a7a" stroke-width=".7"/><path d="M9 15h6" stroke="#e07a8a" stroke-width=".9"/></svg><div style="left:1578.2px;top:599px;width:1px;height:16px;background:#9fa2a8"></div><div style="left:1579.2px;top:599px;width:0.7px;height:16px;background:#e2e4e8"></div><svg style="left:1583.4px;top:603px" width="9.2" height="9.2" viewBox="0 0 10 10"><path d="M1.300 1.300L8.700 8.700M8.700 1.300L1.300 8.700" stroke="#0a0a0a" stroke-width="2.300" stroke-linecap="butt"/></svg><div style="left:275px;top:618.6px;width:1321.8px;height:109.2px;background:#fff;border:1px solid #9a9da4"></div>
</div>
</body></html>
